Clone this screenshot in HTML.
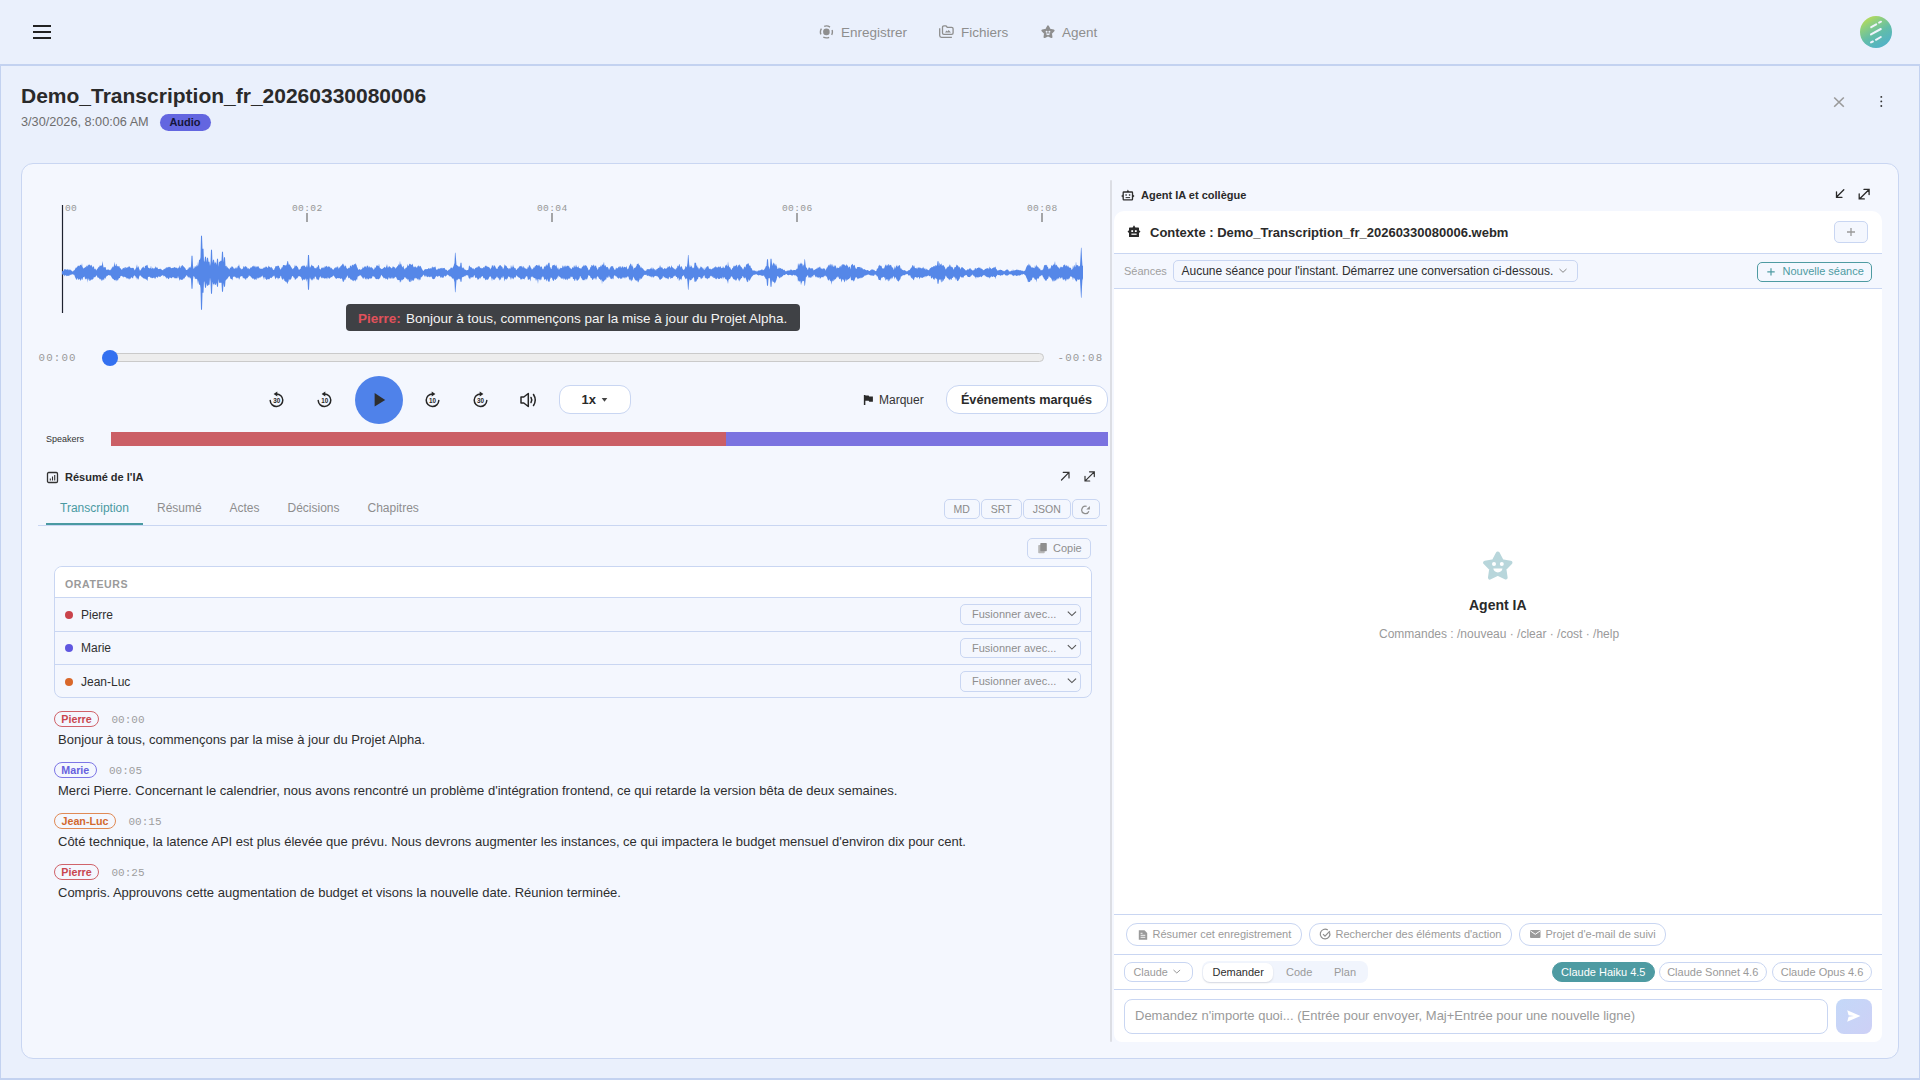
<!DOCTYPE html>
<html><head><meta charset="utf-8">
<style>
*{box-sizing:border-box;margin:0;padding:0}
html,body{width:1920px;height:1080px;overflow:hidden}
body{font-family:"Liberation Sans",sans-serif;background:#EAF0FC;color:#2A2A2A;position:relative}
.a{position:absolute}
.mono{font-family:"Liberation Mono",monospace}
.nav{color:#8E8E8E;font-size:13.5px;top:24.5px;white-space:nowrap}
.frame{left:0;top:64px;width:1920px;height:1016px;border:1px solid #C3D2F0;border-top:2px solid #C3D2F0;border-bottom:2px solid #C3D2F0}
.card{left:21px;top:163px;width:1878px;height:896px;border:1px solid #C9D6F2;border-radius:12px;background:#F4F7FE}
.btn{border:1px solid #C7D5F3;border-radius:5px;background:#F4F7FE;color:#8A8A8A}
.t{white-space:nowrap}
.chip{top:923px;height:22.5px;border:1px solid #C9D6F2;border-radius:11px;font-size:11px;color:#9A9A9A;line-height:19.5px;padding-top:1px}
.mdl{top:961.5px;height:20.5px;border:1px solid #C9D6F2;border-radius:11px;font-size:11px;color:#9A9A9A;line-height:18.5px;text-align:center}

.tab{top:501px;font-size:12px;color:#8E8E8E}
.xb{top:499px;height:20px;border:1px solid #C9D6F2;border-radius:5px;font-size:10.5px;color:#8A8A8A;text-align:center;line-height:19px}
.spk{font-size:12px;color:#2F2F2F}
.sel{left:960px;width:120.5px;height:20.5px;border:1px solid #C9D6F2;border-radius:5px;font-size:11px;color:#8E8E8E;line-height:19px;padding-left:11px}
.bdg{height:16.5px;border:1.3px solid;border-radius:9px;font-size:10.7px;font-weight:bold;text-align:center;line-height:14px}
.tm{font-size:11px;color:#9E9E9E;line-height:14px}
.tx{left:58px;font-size:13px;color:#2E2E2E}

.tl{top:202.5px;font-size:9.6px;color:#979797;letter-spacing:0.35px}
</style></head>
<body>
<!-- header -->
<div class="a" style="left:33px;top:25px;width:18px;height:2px;background:#222"></div>
<div class="a" style="left:33px;top:31px;width:18px;height:2px;background:#222"></div>
<div class="a" style="left:33px;top:37px;width:18px;height:2px;background:#222"></div>

<div class="a nav" style="left:841px">Enregistrer</div>
<div class="a nav" style="left:961px">Fichiers</div>
<div class="a nav" style="left:1062px">Agent</div>

<div class="a" style="left:1860px;top:16px;width:32px;height:32px;border-radius:50%;background:linear-gradient(150deg,#D2E33E 0%,#8FCF7E 28%,#62BDA8 55%,#55B4C2 80%,#52B0C4 100%)"></div>


<svg class="a" style="left:818px;top:23px" width="18" height="18"><circle cx="8.4" cy="8.9" r="3.3" fill="#8E8E8E"/><circle cx="8.4" cy="8.9" r="6" fill="none" stroke="#8E8E8E" stroke-width="1.4" stroke-dasharray="6.1 3.325" stroke-dashoffset="3.05"/></svg>
<svg class="a" style="left:937px;top:23px" width="20" height="18"><path d="M2.7 5.2 V12.6 Q2.7 14.3 4.4 14.3 H14.9" fill="none" stroke="#8E8E8E" stroke-width="1.3"/><path d="M5.5 4.3 Q5.5 2.8 7 2.8 H8.6 Q9.4 2.8 9.8 3.6 L10.2 4.3 H14.6 Q16.1 4.3 16.1 5.8 V9.9 Q16.1 11.3 14.7 11.3 H6.9 Q5.5 11.3 5.5 9.9Z" fill="none" stroke="#8E8E8E" stroke-width="1.3"/><path d="M8 9.6 L9.6 7.4 L10.5 8.4 L11.6 7 L14 9.6Z" fill="#8E8E8E"/></svg>
<svg class="a" style="left:1039px;top:23px" width="18" height="18"><path d="M9.00 3.40 L10.80 6.82 L14.61 7.48 L11.92 10.25 L12.47 14.07 L9.00 12.37 L5.53 14.07 L6.08 10.25 L3.39 7.48 L7.20 6.82Z" fill="#8E8E8E" stroke="#8E8E8E" stroke-width="2" stroke-linejoin="round"/><circle cx="7.6" cy="8.8" r="0.95" fill="#EAF0FC"/><circle cx="10.4" cy="8.8" r="0.95" fill="#EAF0FC"/><path d="M6.9 10.6 H11.1 Q10.7 12.3 9 12.3 Q7.3 12.3 6.9 10.6Z" fill="#EAF0FC"/></svg>

<svg class="a" style="left:1860px;top:16px" width="32" height="32"><g stroke="#EEF3FD" stroke-width="2" stroke-linecap="round"><path d="M11.2 11.2 L16.2 8.4"/><path d="M19.1 6.6 L21 5.7"/><path d="M11 18.4 L20.8 13"/><path d="M16 23.8 L20.8 21"/><path d="M11 26.4 L12.9 25.5"/></g></svg>

<svg class="a" style="left:1831px;top:94px" width="16" height="16"><path d="M3.2 3.5 L12.8 12.8 M12.8 3.5 L3.2 12.8" stroke="#9A9A9A" stroke-width="1.6"/></svg>
<svg class="a" style="left:1876px;top:93px" width="10" height="16"><circle cx="5.3" cy="3.9" r="0.95" fill="#333"/><circle cx="5.3" cy="8.4" r="0.95" fill="#333"/><circle cx="5.3" cy="13" r="0.95" fill="#333"/></svg>
<div class="a frame"></div>

<div class="a t" style="left:21px;top:84px;font-size:21px;font-weight:bold;color:#2A2A2A">Demo_Transcription_fr_20260330080006</div>
<div class="a t" style="left:21px;top:115px;font-size:12.7px;color:#6E6E6E">3/30/2026, 8:00:06 AM</div>
<div class="a t" style="left:159.5px;top:114px;width:51px;height:17px;border-radius:9px;background:#6366E0;color:#16163A;font-size:11px;font-weight:bold;text-align:center;line-height:17px">Audio</div>

<div class="a card"></div>


<!-- LEFT PANEL -->
<svg class="a" style="left:0;top:0" width="1110" height="330">
<line x1="62.5" y1="205" x2="62.5" y2="313" stroke="#1E2230" stroke-width="1.2"/>
<path d="M62.0 271.4 L62.5 271.0 L63.0 270.7 L63.5 270.9 L64.0 270.0 L64.5 268.7 L65.0 269.8 L65.5 268.8 L66.0 270.0 L66.5 269.6 L67.0 269.4 L67.5 269.6 L68.0 269.0 L68.5 269.8 L69.0 270.4 L69.5 269.5 L70.0 269.6 L70.5 269.8 L71.0 270.4 L71.5 270.4 L72.0 271.0 L72.5 271.5 L73.0 271.4 L73.5 270.7 L74.0 270.3 L74.5 270.2 L75.0 269.2 L75.5 268.3 L76.0 267.2 L76.5 267.9 L77.0 267.0 L77.5 266.6 L78.0 265.6 L78.5 266.0 L79.0 265.5 L79.5 266.5 L80.0 264.7 L80.5 265.0 L81.0 264.7 L81.5 266.1 L82.0 263.1 L82.5 267.3 L83.0 267.6 L83.5 268.8 L84.0 267.9 L84.5 268.0 L85.0 267.0 L85.5 266.7 L86.0 267.8 L86.5 265.5 L87.0 265.9 L87.5 266.4 L88.0 264.6 L88.5 265.5 L89.0 264.2 L89.5 264.7 L90.0 264.9 L90.5 265.9 L91.0 264.8 L91.5 265.0 L92.0 266.3 L92.5 267.7 L93.0 266.0 L93.5 266.6 L94.0 266.9 L94.5 269.3 L95.0 268.9 L95.5 268.6 L96.0 270.3 L96.5 270.2 L97.0 268.9 L97.5 268.8 L98.0 268.1 L98.5 266.8 L99.0 267.4 L99.5 265.9 L100.0 265.2 L100.5 265.9 L101.0 265.6 L101.5 265.7 L102.0 265.0 L102.5 260.9 L103.0 264.2 L103.5 267.3 L104.0 267.6 L104.5 267.3 L105.0 267.0 L105.5 267.0 L106.0 268.8 L106.5 270.1 L107.0 270.0 L107.5 269.4 L108.0 269.4 L108.5 269.4 L109.0 269.8 L109.5 270.1 L110.0 270.4 L110.5 269.5 L111.0 269.8 L111.5 268.5 L112.0 267.4 L112.5 267.3 L113.0 266.0 L113.5 267.6 L114.0 264.9 L114.5 261.7 L115.0 265.7 L115.5 266.0 L116.0 264.1 L116.5 263.8 L117.0 266.7 L117.5 266.1 L118.0 265.7 L118.5 266.7 L119.0 265.9 L119.5 266.4 L120.0 268.4 L120.5 268.1 L121.0 268.9 L121.5 269.6 L122.0 270.1 L122.5 268.4 L123.0 268.6 L123.5 267.8 L124.0 268.3 L124.5 267.1 L125.0 269.1 L125.5 267.1 L126.0 267.0 L126.5 268.1 L127.0 267.7 L127.5 267.1 L128.0 267.7 L128.5 266.4 L129.0 266.5 L129.5 266.3 L130.0 267.3 L130.5 267.7 L131.0 268.2 L131.5 267.9 L132.0 267.8 L132.5 268.1 L133.0 267.7 L133.5 268.0 L134.0 268.7 L134.5 270.0 L135.0 270.4 L135.5 268.4 L136.0 268.4 L136.5 266.5 L137.0 264.2 L137.5 267.4 L138.0 267.4 L138.5 265.7 L139.0 268.4 L139.5 269.6 L140.0 270.9 L140.5 269.9 L141.0 269.7 L141.5 268.5 L142.0 267.9 L142.5 267.5 L143.0 266.8 L143.5 266.5 L144.0 268.0 L144.5 268.3 L145.0 265.9 L145.5 265.7 L146.0 265.8 L146.5 265.1 L147.0 265.7 L147.5 264.5 L148.0 267.3 L148.5 267.9 L149.0 267.8 L149.5 268.5 L150.0 268.3 L150.5 268.0 L151.0 265.6 L151.5 268.5 L152.0 268.9 L152.5 267.6 L153.0 268.1 L153.5 268.2 L154.0 269.4 L154.5 267.7 L155.0 267.9 L155.5 266.1 L156.0 267.7 L156.5 267.5 L157.0 267.6 L157.5 267.5 L158.0 269.1 L158.5 268.9 L159.0 269.2 L159.5 268.7 L160.0 268.9 L160.5 268.4 L161.0 269.6 L161.5 269.2 L162.0 270.1 L162.5 270.1 L163.0 270.6 L163.5 269.3 L164.0 269.3 L164.5 268.6 L165.0 269.4 L165.5 268.0 L166.0 267.8 L166.5 267.1 L167.0 268.4 L167.5 266.7 L168.0 267.7 L168.5 266.8 L169.0 267.0 L169.5 267.3 L170.0 266.6 L170.5 267.4 L171.0 268.1 L171.5 268.2 L172.0 267.9 L172.5 268.0 L173.0 267.5 L173.5 268.1 L174.0 267.2 L174.5 266.9 L175.0 267.4 L175.5 267.7 L176.0 267.4 L176.5 268.0 L177.0 267.4 L177.5 268.5 L178.0 268.6 L178.5 267.7 L179.0 267.1 L179.5 265.1 L180.0 268.0 L180.5 267.7 L181.0 265.5 L181.5 266.7 L182.0 265.1 L182.5 265.1 L183.0 266.4 L183.5 266.1 L184.0 267.0 L184.5 267.2 L185.0 268.0 L185.5 268.4 L186.0 269.9 L186.5 270.0 L187.0 269.8 L187.5 269.8 L188.0 268.2 L188.5 269.0 L189.0 266.8 L189.5 268.0 L190.0 266.8 L190.5 268.1 L191.0 265.6 L191.5 255.7 L192.0 255.7 L192.5 255.7 L193.0 265.6 L193.5 268.7 L194.0 268.4 L194.5 267.6 L195.0 265.8 L195.5 266.5 L196.0 267.5 L196.5 265.4 L197.0 264.9 L197.5 266.5 L198.0 261.2 L198.5 266.1 L199.0 259.7 L199.5 259.7 L200.0 259.7 L200.5 257.2 L201.0 235.7 L201.5 235.7 L202.0 235.7 L202.5 248.7 L203.0 248.7 L203.5 248.7 L204.0 262.0 L204.5 261.0 L205.0 256.7 L205.5 256.7 L206.0 256.7 L206.5 262.6 L207.0 257.7 L207.5 257.7 L208.0 257.7 L208.5 261.7 L209.0 261.7 L209.5 261.7 L210.0 266.0 L210.5 263.0 L211.0 249.7 L211.5 249.7 L212.0 249.7 L212.5 263.0 L213.0 259.7 L213.5 259.7 L214.0 259.7 L214.5 264.1 L215.0 261.2 L215.5 262.7 L216.0 262.7 L216.5 265.1 L217.0 258.7 L217.5 258.7 L218.0 258.7 L218.5 266.8 L219.0 261.7 L219.5 261.7 L220.0 261.7 L220.5 260.7 L221.0 260.7 L221.5 260.7 L222.0 251.7 L222.5 251.7 L223.0 251.7 L223.5 262.4 L224.0 257.2 L224.5 257.2 L225.0 257.2 L225.5 266.0 L226.0 266.3 L226.5 265.6 L227.0 268.1 L227.5 266.4 L228.0 268.1 L228.5 268.3 L229.0 269.0 L229.5 269.5 L230.0 267.6 L230.5 267.5 L231.0 268.2 L231.5 266.0 L232.0 266.9 L232.5 266.2 L233.0 267.3 L233.5 267.8 L234.0 269.0 L234.5 268.4 L235.0 268.3 L235.5 268.6 L236.0 266.8 L236.5 268.0 L237.0 268.8 L237.5 266.9 L238.0 265.7 L238.5 266.3 L239.0 264.0 L239.5 266.4 L240.0 268.3 L240.5 267.8 L241.0 269.4 L241.5 269.3 L242.0 268.6 L242.5 269.2 L243.0 267.9 L243.5 266.6 L244.0 265.8 L244.5 267.2 L245.0 267.2 L245.5 265.9 L246.0 266.1 L246.5 267.4 L247.0 266.8 L247.5 268.7 L248.0 268.3 L248.5 267.9 L249.0 269.4 L249.5 268.8 L250.0 268.6 L250.5 267.5 L251.0 267.4 L251.5 267.5 L252.0 266.9 L252.5 266.3 L253.0 265.9 L253.5 265.5 L254.0 267.2 L254.5 266.3 L255.0 265.4 L255.5 266.8 L256.0 267.8 L256.5 265.9 L257.0 267.2 L257.5 266.5 L258.0 265.9 L258.5 266.6 L259.0 267.6 L259.5 268.7 L260.0 267.6 L260.5 269.0 L261.0 268.9 L261.5 268.6 L262.0 268.9 L262.5 268.8 L263.0 268.3 L263.5 268.3 L264.0 267.0 L264.5 267.6 L265.0 268.3 L265.5 266.3 L266.0 267.2 L266.5 266.5 L267.0 266.7 L267.5 267.9 L268.0 267.7 L268.5 265.4 L269.0 266.4 L269.5 266.7 L270.0 267.0 L270.5 267.8 L271.0 267.2 L271.5 266.7 L272.0 268.5 L272.5 268.0 L273.0 269.9 L273.5 269.4 L274.0 270.3 L274.5 268.4 L275.0 267.7 L275.5 266.2 L276.0 265.9 L276.5 266.1 L277.0 266.7 L277.5 265.5 L278.0 266.0 L278.5 265.6 L279.0 266.2 L279.5 267.8 L280.0 268.4 L280.5 269.6 L281.0 269.5 L281.5 267.6 L282.0 267.5 L282.5 267.2 L283.0 264.9 L283.5 265.0 L284.0 265.2 L284.5 265.0 L285.0 265.5 L285.5 265.2 L286.0 265.4 L286.5 264.9 L287.0 263.1 L287.5 260.9 L288.0 260.9 L288.5 263.5 L289.0 265.2 L289.5 263.9 L290.0 265.1 L290.5 265.9 L291.0 266.7 L291.5 267.4 L292.0 268.5 L292.5 268.8 L293.0 269.6 L293.5 268.1 L294.0 268.0 L294.5 266.4 L295.0 264.6 L295.5 266.4 L296.0 266.1 L296.5 265.6 L297.0 266.2 L297.5 267.0 L298.0 267.6 L298.5 269.0 L299.0 270.0 L299.5 269.4 L300.0 269.0 L300.5 269.0 L301.0 267.0 L301.5 266.5 L302.0 266.0 L302.5 265.4 L303.0 266.4 L303.5 265.5 L304.0 265.4 L304.5 265.8 L305.0 265.7 L305.5 267.3 L306.0 267.0 L306.5 264.4 L307.0 267.8 L307.5 265.3 L308.0 255.1 L308.5 255.1 L309.0 255.1 L309.5 265.3 L310.0 268.0 L310.5 266.4 L311.0 266.4 L311.5 264.4 L312.0 264.9 L312.5 266.1 L313.0 266.0 L313.5 266.1 L314.0 267.3 L314.5 267.7 L315.0 268.5 L315.5 267.8 L316.0 268.8 L316.5 267.8 L317.0 266.5 L317.5 267.5 L318.0 265.4 L318.5 265.0 L319.0 265.6 L319.5 268.7 L320.0 269.1 L320.5 269.7 L321.0 268.8 L321.5 267.5 L322.0 267.9 L322.5 267.3 L323.0 268.5 L323.5 266.8 L324.0 268.6 L324.5 267.0 L325.0 265.9 L325.5 266.7 L326.0 266.8 L326.5 265.7 L327.0 266.1 L327.5 267.6 L328.0 266.6 L328.5 266.8 L329.0 265.9 L329.5 267.3 L330.0 266.4 L330.5 268.1 L331.0 268.5 L331.5 267.5 L332.0 268.8 L332.5 268.9 L333.0 269.9 L333.5 269.6 L334.0 268.9 L334.5 267.9 L335.0 267.8 L335.5 267.0 L336.0 268.5 L336.5 266.6 L337.0 267.7 L337.5 266.4 L338.0 266.3 L338.5 268.5 L339.0 268.6 L339.5 266.9 L340.0 267.7 L340.5 266.1 L341.0 266.3 L341.5 265.2 L342.0 264.9 L342.5 264.0 L343.0 263.6 L343.5 264.2 L344.0 265.8 L344.5 266.9 L345.0 264.4 L345.5 266.2 L346.0 265.9 L346.5 268.2 L347.0 268.3 L347.5 269.1 L348.0 268.7 L348.5 267.6 L349.0 268.3 L349.5 267.9 L350.0 266.3 L350.5 265.2 L351.0 266.2 L351.5 266.8 L352.0 264.6 L352.5 265.2 L353.0 264.5 L353.5 265.7 L354.0 264.0 L354.5 263.9 L355.0 264.7 L355.5 263.1 L356.0 264.2 L356.5 265.0 L357.0 266.9 L357.5 267.8 L358.0 269.1 L358.5 270.1 L359.0 269.5 L359.5 269.2 L360.0 269.1 L360.5 269.7 L361.0 270.2 L361.5 269.0 L362.0 268.9 L362.5 268.0 L363.0 266.5 L363.5 268.2 L364.0 267.5 L364.5 266.4 L365.0 266.3 L365.5 267.1 L366.0 265.7 L366.5 268.1 L367.0 265.2 L367.5 265.9 L368.0 265.4 L368.5 267.3 L369.0 267.6 L369.5 265.8 L370.0 268.1 L370.5 266.7 L371.0 268.2 L371.5 266.7 L372.0 267.6 L372.5 268.4 L373.0 268.3 L373.5 269.8 L374.0 269.5 L374.5 268.5 L375.0 266.7 L375.5 268.3 L376.0 266.8 L376.5 265.5 L377.0 265.3 L377.5 265.4 L378.0 266.1 L378.5 266.3 L379.0 263.5 L379.5 266.6 L380.0 268.4 L380.5 267.9 L381.0 268.7 L381.5 269.2 L382.0 268.7 L382.5 268.9 L383.0 268.2 L383.5 267.9 L384.0 267.5 L384.5 266.8 L385.0 267.3 L385.5 268.1 L386.0 267.1 L386.5 266.0 L387.0 264.0 L387.5 266.4 L388.0 268.3 L388.5 266.4 L389.0 266.8 L389.5 265.9 L390.0 267.0 L390.5 267.2 L391.0 267.7 L391.5 268.5 L392.0 267.7 L392.5 267.5 L393.0 265.7 L393.5 266.9 L394.0 266.9 L394.5 266.9 L395.0 268.3 L395.5 268.7 L396.0 267.2 L396.5 267.7 L397.0 266.7 L397.5 266.1 L398.0 265.7 L398.5 263.8 L399.0 265.6 L399.5 264.3 L400.0 260.8 L400.5 264.7 L401.0 263.4 L401.5 264.8 L402.0 266.6 L402.5 267.4 L403.0 265.9 L403.5 265.7 L404.0 268.4 L404.5 268.7 L405.0 269.7 L405.5 267.8 L406.0 267.9 L406.5 267.4 L407.0 267.0 L407.5 263.7 L408.0 266.2 L408.5 265.8 L409.0 264.7 L409.5 263.6 L410.0 264.2 L410.5 263.8 L411.0 265.1 L411.5 264.8 L412.0 264.6 L412.5 263.6 L413.0 265.5 L413.5 266.8 L414.0 267.4 L414.5 266.3 L415.0 267.5 L415.5 265.9 L416.0 267.3 L416.5 267.3 L417.0 268.0 L417.5 266.0 L418.0 266.6 L418.5 265.5 L419.0 265.4 L419.5 267.0 L420.0 265.8 L420.5 265.9 L421.0 266.7 L421.5 268.1 L422.0 268.9 L422.5 269.8 L423.0 270.8 L423.5 271.1 L424.0 269.9 L424.5 269.5 L425.0 269.5 L425.5 268.9 L426.0 269.3 L426.5 269.3 L427.0 269.0 L427.5 269.1 L428.0 269.2 L428.5 268.0 L429.0 268.1 L429.5 268.8 L430.0 268.8 L430.5 268.0 L431.0 268.4 L431.5 268.5 L432.0 266.8 L432.5 266.5 L433.0 267.9 L433.5 267.1 L434.0 267.2 L434.5 267.3 L435.0 266.5 L435.5 266.7 L436.0 268.9 L436.5 270.1 L437.0 269.2 L437.5 269.7 L438.0 268.6 L438.5 268.9 L439.0 268.1 L439.5 268.7 L440.0 268.9 L440.5 268.0 L441.0 267.9 L441.5 268.5 L442.0 267.4 L442.5 268.6 L443.0 268.3 L443.5 268.1 L444.0 268.2 L444.5 267.7 L445.0 268.7 L445.5 269.4 L446.0 270.2 L446.5 269.5 L447.0 270.3 L447.5 271.0 L448.0 270.4 L448.5 270.1 L449.0 269.5 L449.5 269.3 L450.0 269.4 L450.5 268.1 L451.0 267.6 L451.5 267.5 L452.0 268.3 L452.5 268.3 L453.0 266.7 L453.5 266.5 L454.0 264.4 L454.5 262.9 L455.0 252.7 L455.5 252.7 L456.0 258.7 L456.5 265.0 L457.0 264.9 L457.5 265.8 L458.0 266.1 L458.5 266.2 L459.0 267.3 L459.5 266.0 L460.0 266.7 L460.5 262.7 L461.0 262.7 L461.5 262.7 L462.0 268.2 L462.5 267.9 L463.0 266.8 L463.5 268.0 L464.0 268.5 L464.5 268.9 L465.0 270.2 L465.5 269.6 L466.0 270.1 L466.5 270.4 L467.0 270.1 L467.5 270.1 L468.0 270.3 L468.5 269.0 L469.0 265.6 L469.5 265.8 L470.0 266.5 L470.5 267.3 L471.0 267.2 L471.5 267.3 L472.0 268.2 L472.5 268.6 L473.0 268.5 L473.5 268.3 L474.0 269.5 L474.5 269.3 L475.0 268.6 L475.5 267.8 L476.0 268.0 L476.5 266.9 L477.0 268.0 L477.5 266.9 L478.0 266.6 L478.5 265.7 L479.0 267.5 L479.5 265.7 L480.0 267.4 L480.5 268.3 L481.0 267.5 L481.5 268.4 L482.0 268.3 L482.5 268.0 L483.0 268.5 L483.5 266.9 L484.0 266.9 L484.5 267.8 L485.0 265.5 L485.5 266.3 L486.0 265.3 L486.5 266.3 L487.0 266.5 L487.5 266.7 L488.0 266.6 L488.5 267.3 L489.0 267.0 L489.5 267.8 L490.0 268.4 L490.5 269.4 L491.0 267.8 L491.5 267.7 L492.0 265.1 L492.5 265.9 L493.0 264.8 L493.5 267.4 L494.0 265.0 L494.5 265.5 L495.0 266.2 L495.5 266.8 L496.0 268.6 L496.5 268.4 L497.0 269.1 L497.5 268.8 L498.0 266.9 L498.5 266.7 L499.0 266.0 L499.5 265.4 L500.0 264.9 L500.5 265.1 L501.0 266.2 L501.5 266.3 L502.0 266.7 L502.5 267.3 L503.0 269.6 L503.5 268.2 L504.0 267.5 L504.5 264.1 L505.0 265.7 L505.5 265.0 L506.0 266.3 L506.5 265.8 L507.0 267.2 L507.5 268.0 L508.0 268.1 L508.5 268.6 L509.0 269.5 L509.5 268.0 L510.0 268.2 L510.5 268.7 L511.0 264.5 L511.5 268.0 L512.0 265.7 L512.5 268.0 L513.0 264.3 L513.5 266.5 L514.0 267.2 L514.5 267.9 L515.0 268.5 L515.5 267.8 L516.0 270.0 L516.5 270.1 L517.0 269.1 L517.5 268.6 L518.0 268.5 L518.5 267.8 L519.0 266.9 L519.5 266.1 L520.0 266.7 L520.5 266.0 L521.0 266.1 L521.5 266.7 L522.0 265.5 L522.5 267.9 L523.0 266.5 L523.5 266.1 L524.0 268.3 L524.5 266.9 L525.0 268.7 L525.5 268.2 L526.0 268.5 L526.5 268.8 L527.0 269.6 L527.5 268.1 L528.0 266.4 L528.5 267.9 L529.0 265.1 L529.5 265.6 L530.0 265.6 L530.5 266.9 L531.0 268.0 L531.5 268.4 L532.0 269.9 L532.5 268.6 L533.0 269.3 L533.5 267.0 L534.0 267.9 L534.5 267.3 L535.0 265.8 L535.5 266.6 L536.0 265.1 L536.5 265.0 L537.0 265.2 L537.5 265.5 L538.0 265.6 L538.5 265.7 L539.0 264.3 L539.5 265.5 L540.0 266.6 L540.5 267.6 L541.0 265.8 L541.5 266.8 L542.0 267.2 L542.5 269.0 L543.0 269.4 L543.5 269.0 L544.0 266.9 L544.5 265.9 L545.0 267.0 L545.5 266.2 L546.0 265.0 L546.5 264.3 L547.0 266.4 L547.5 264.7 L548.0 264.1 L548.5 262.7 L549.0 262.7 L549.5 262.7 L550.0 267.2 L550.5 267.3 L551.0 269.1 L551.5 268.9 L552.0 266.5 L552.5 265.5 L553.0 265.0 L553.5 265.0 L554.0 265.4 L554.5 264.3 L555.0 265.7 L555.5 266.2 L556.0 264.4 L556.5 265.5 L557.0 267.3 L557.5 269.1 L558.0 266.9 L558.5 268.7 L559.0 269.9 L559.5 268.4 L560.0 268.7 L560.5 267.5 L561.0 268.3 L561.5 267.8 L562.0 268.3 L562.5 266.0 L563.0 265.2 L563.5 267.8 L564.0 265.4 L564.5 266.1 L565.0 267.6 L565.5 265.0 L566.0 267.0 L566.5 266.2 L567.0 265.4 L567.5 266.0 L568.0 265.5 L568.5 266.5 L569.0 265.5 L569.5 267.5 L570.0 267.7 L570.5 267.9 L571.0 269.2 L571.5 269.1 L572.0 268.3 L572.5 266.7 L573.0 268.1 L573.5 267.4 L574.0 265.3 L574.5 265.9 L575.0 267.6 L575.5 266.5 L576.0 264.5 L576.5 266.1 L577.0 267.2 L577.5 266.8 L578.0 267.7 L578.5 265.5 L579.0 268.4 L579.5 267.9 L580.0 268.0 L580.5 268.8 L581.0 268.0 L581.5 268.8 L582.0 266.5 L582.5 266.8 L583.0 266.6 L583.5 265.7 L584.0 264.4 L584.5 266.5 L585.0 265.0 L585.5 265.6 L586.0 265.3 L586.5 265.9 L587.0 266.5 L587.5 267.7 L588.0 268.5 L588.5 270.2 L589.0 270.2 L589.5 269.6 L590.0 268.8 L590.5 266.6 L591.0 267.4 L591.5 265.0 L592.0 264.9 L592.5 265.8 L593.0 265.9 L593.5 264.7 L594.0 264.6 L594.5 266.9 L595.0 265.6 L595.5 266.0 L596.0 265.2 L596.5 267.6 L597.0 267.9 L597.5 269.7 L598.0 269.6 L598.5 267.4 L599.0 266.7 L599.5 266.9 L600.0 267.4 L600.5 265.8 L601.0 265.3 L601.5 266.7 L602.0 264.1 L602.5 264.8 L603.0 265.3 L603.5 263.6 L604.0 261.8 L604.5 266.6 L605.0 264.8 L605.5 265.4 L606.0 266.6 L606.5 267.4 L607.0 266.7 L607.5 266.9 L608.0 267.6 L608.5 268.4 L609.0 270.0 L609.5 269.0 L610.0 267.6 L610.5 267.5 L611.0 265.9 L611.5 266.4 L612.0 266.0 L612.5 266.6 L613.0 265.9 L613.5 267.9 L614.0 268.5 L614.5 270.1 L615.0 269.6 L615.5 269.8 L616.0 267.3 L616.5 268.2 L617.0 268.6 L617.5 268.3 L618.0 267.8 L618.5 267.0 L619.0 266.5 L619.5 266.3 L620.0 268.1 L620.5 266.3 L621.0 266.2 L621.5 268.3 L622.0 267.1 L622.5 266.3 L623.0 266.6 L623.5 268.2 L624.0 266.5 L624.5 267.1 L625.0 266.9 L625.5 267.3 L626.0 267.5 L626.5 265.8 L627.0 268.0 L627.5 269.5 L628.0 268.7 L628.5 268.4 L629.0 266.5 L629.5 265.5 L630.0 264.8 L630.5 263.5 L631.0 263.8 L631.5 266.4 L632.0 263.7 L632.5 266.8 L633.0 266.3 L633.5 269.9 L634.0 267.4 L634.5 268.3 L635.0 267.8 L635.5 267.6 L636.0 266.5 L636.5 266.0 L637.0 263.4 L637.5 264.3 L638.0 263.8 L638.5 263.3 L639.0 265.6 L639.5 264.8 L640.0 266.1 L640.5 266.9 L641.0 268.2 L641.5 266.6 L642.0 268.7 L642.5 268.0 L643.0 268.6 L643.5 269.5 L644.0 270.0 L644.5 270.7 L645.0 270.5 L645.5 270.7 L646.0 271.0 L646.5 270.0 L647.0 268.9 L647.5 269.3 L648.0 269.3 L648.5 269.2 L649.0 268.9 L649.5 269.5 L650.0 268.9 L650.5 267.9 L651.0 269.3 L651.5 268.3 L652.0 267.1 L652.5 268.7 L653.0 269.8 L653.5 267.6 L654.0 269.0 L654.5 268.9 L655.0 270.4 L655.5 269.3 L656.0 270.8 L656.5 269.0 L657.0 268.9 L657.5 268.8 L658.0 268.3 L658.5 267.8 L659.0 267.9 L659.5 267.2 L660.0 264.9 L660.5 266.6 L661.0 268.0 L661.5 267.0 L662.0 267.8 L662.5 267.4 L663.0 269.4 L663.5 269.1 L664.0 268.8 L664.5 268.1 L665.0 268.3 L665.5 268.9 L666.0 268.2 L666.5 268.7 L667.0 267.9 L667.5 267.5 L668.0 266.0 L668.5 267.4 L669.0 266.6 L669.5 265.9 L670.0 266.8 L670.5 268.3 L671.0 267.1 L671.5 265.1 L672.0 266.8 L672.5 267.4 L673.0 267.6 L673.5 268.4 L674.0 268.3 L674.5 269.5 L675.0 268.5 L675.5 269.4 L676.0 269.7 L676.5 267.5 L677.0 268.3 L677.5 265.6 L678.0 266.1 L678.5 266.6 L679.0 264.4 L679.5 264.1 L680.0 265.9 L680.5 267.7 L681.0 266.3 L681.5 266.2 L682.0 267.0 L682.5 268.7 L683.0 269.6 L683.5 269.8 L684.0 270.0 L684.5 269.0 L685.0 268.3 L685.5 265.9 L686.0 266.2 L686.5 267.4 L687.0 266.0 L687.5 262.8 L688.0 255.1 L688.5 255.1 L689.0 261.6 L689.5 267.7 L690.0 264.5 L690.5 266.8 L691.0 266.9 L691.5 265.3 L692.0 266.9 L692.5 268.6 L693.0 267.1 L693.5 268.1 L694.0 268.2 L694.5 262.7 L695.0 262.7 L695.5 262.7 L696.0 262.8 L696.5 266.2 L697.0 264.9 L697.5 267.4 L698.0 267.2 L698.5 268.1 L699.0 269.7 L699.5 267.9 L700.0 268.4 L700.5 266.8 L701.0 266.2 L701.5 267.6 L702.0 266.8 L702.5 268.7 L703.0 267.4 L703.5 269.1 L704.0 269.8 L704.5 269.9 L705.0 266.9 L705.5 269.4 L706.0 267.2 L706.5 267.6 L707.0 266.3 L707.5 266.4 L708.0 266.0 L708.5 266.7 L709.0 268.8 L709.5 268.9 L710.0 268.2 L710.5 269.0 L711.0 269.4 L711.5 269.2 L712.0 269.1 L712.5 268.3 L713.0 268.7 L713.5 267.9 L714.0 267.5 L714.5 267.0 L715.0 267.7 L715.5 266.2 L716.0 266.6 L716.5 267.5 L717.0 267.3 L717.5 267.4 L718.0 267.4 L718.5 266.3 L719.0 267.1 L719.5 267.5 L720.0 266.0 L720.5 266.6 L721.0 267.4 L721.5 268.3 L722.0 267.9 L722.5 267.9 L723.0 265.9 L723.5 267.3 L724.0 267.9 L724.5 268.2 L725.0 266.8 L725.5 265.3 L726.0 265.5 L726.5 264.2 L727.0 266.1 L727.5 266.5 L728.0 261.3 L728.5 265.1 L729.0 266.3 L729.5 267.6 L730.0 267.0 L730.5 268.3 L731.0 269.4 L731.5 269.9 L732.0 268.7 L732.5 267.9 L733.0 267.8 L733.5 266.2 L734.0 265.4 L734.5 266.7 L735.0 265.3 L735.5 266.2 L736.0 265.6 L736.5 265.0 L737.0 264.5 L737.5 267.4 L738.0 265.9 L738.5 265.3 L739.0 264.8 L739.5 264.3 L740.0 265.7 L740.5 265.6 L741.0 267.2 L741.5 266.7 L742.0 267.9 L742.5 268.4 L743.0 269.7 L743.5 268.9 L744.0 267.3 L744.5 266.2 L745.0 267.4 L745.5 267.3 L746.0 265.3 L746.5 264.3 L747.0 264.0 L747.5 264.3 L748.0 262.8 L748.5 263.5 L749.0 264.7 L749.5 266.0 L750.0 265.3 L750.5 266.1 L751.0 268.4 L751.5 267.8 L752.0 269.0 L752.5 270.5 L753.0 270.6 L753.5 270.4 L754.0 270.5 L754.5 270.4 L755.0 270.8 L755.5 270.8 L756.0 271.5 L756.5 271.5 L757.0 270.3 L757.5 271.4 L758.0 271.2 L758.5 270.2 L759.0 270.6 L759.5 270.2 L760.0 270.7 L760.5 269.9 L761.0 269.9 L761.5 269.6 L762.0 269.4 L762.5 269.6 L763.0 270.4 L763.5 269.7 L764.0 269.9 L764.5 268.7 L765.0 268.4 L765.5 267.0 L766.0 266.0 L766.5 266.2 L767.0 259.2 L767.5 259.2 L768.0 259.2 L768.5 266.2 L769.0 266.8 L769.5 269.6 L770.0 266.8 L770.5 258.7 L771.0 258.7 L771.5 258.7 L772.0 264.1 L772.5 266.1 L773.0 262.9 L773.5 262.6 L774.0 264.6 L774.5 262.9 L775.0 265.9 L775.5 265.1 L776.0 263.6 L776.5 265.7 L777.0 266.7 L777.5 269.0 L778.0 268.9 L778.5 268.2 L779.0 267.3 L779.5 268.3 L780.0 268.4 L780.5 268.0 L781.0 268.3 L781.5 269.3 L782.0 268.5 L782.5 268.9 L783.0 269.5 L783.5 269.9 L784.0 270.3 L784.5 269.4 L785.0 270.7 L785.5 271.2 L786.0 271.3 L786.5 271.2 L787.0 270.6 L787.5 270.6 L788.0 270.9 L788.5 270.2 L789.0 270.6 L789.5 270.2 L790.0 270.4 L790.5 269.6 L791.0 269.6 L791.5 269.8 L792.0 269.9 L792.5 270.7 L793.0 269.8 L793.5 270.2 L794.0 270.1 L794.5 270.1 L795.0 270.1 L795.5 270.2 L796.0 269.6 L796.5 269.2 L797.0 268.2 L797.5 269.1 L798.0 263.1 L798.5 264.2 L799.0 265.9 L799.5 264.3 L800.0 263.3 L800.5 264.0 L801.0 262.3 L801.5 263.9 L802.0 263.3 L802.5 264.5 L803.0 266.8 L803.5 264.6 L804.0 265.1 L804.5 259.2 L805.0 259.2 L805.5 264.2 L806.0 267.4 L806.5 267.6 L807.0 268.3 L807.5 269.6 L808.0 270.1 L808.5 267.4 L809.0 267.7 L809.5 267.5 L810.0 267.7 L810.5 269.0 L811.0 267.7 L811.5 268.7 L812.0 268.1 L812.5 268.4 L813.0 268.4 L813.5 270.4 L814.0 270.1 L814.5 269.7 L815.0 269.8 L815.5 268.9 L816.0 269.3 L816.5 268.0 L817.0 269.3 L817.5 267.7 L818.0 267.4 L818.5 267.7 L819.0 267.2 L819.5 267.3 L820.0 266.2 L820.5 267.8 L821.0 268.7 L821.5 268.7 L822.0 267.9 L822.5 269.5 L823.0 268.3 L823.5 268.3 L824.0 269.0 L824.5 268.5 L825.0 268.5 L825.5 270.7 L826.0 269.5 L826.5 268.5 L827.0 267.3 L827.5 267.4 L828.0 265.8 L828.5 265.6 L829.0 264.6 L829.5 264.7 L830.0 266.4 L830.5 263.5 L831.0 265.0 L831.5 264.0 L832.0 267.1 L832.5 263.8 L833.0 266.4 L833.5 267.1 L834.0 264.7 L834.5 267.0 L835.0 265.0 L835.5 265.7 L836.0 266.5 L836.5 268.3 L837.0 268.4 L837.5 267.2 L838.0 268.1 L838.5 267.8 L839.0 268.2 L839.5 266.6 L840.0 266.5 L840.5 265.6 L841.0 267.7 L841.5 264.5 L842.0 265.8 L842.5 264.0 L843.0 264.5 L843.5 263.9 L844.0 265.2 L844.5 264.3 L845.0 265.5 L845.5 265.8 L846.0 265.4 L846.5 263.8 L847.0 266.0 L847.5 265.1 L848.0 266.6 L848.5 267.9 L849.0 266.2 L849.5 266.8 L850.0 267.2 L850.5 269.6 L851.0 265.5 L851.5 265.0 L852.0 264.3 L852.5 263.7 L853.0 264.8 L853.5 266.0 L854.0 264.9 L854.5 264.7 L855.0 266.3 L855.5 268.0 L856.0 268.7 L856.5 268.9 L857.0 267.5 L857.5 266.9 L858.0 267.1 L858.5 266.9 L859.0 267.0 L859.5 267.2 L860.0 266.7 L860.5 267.2 L861.0 268.8 L861.5 267.3 L862.0 268.1 L862.5 268.3 L863.0 269.5 L863.5 268.9 L864.0 269.7 L864.5 269.0 L865.0 269.3 L865.5 270.0 L866.0 270.1 L866.5 270.4 L867.0 269.9 L867.5 270.0 L868.0 270.3 L868.5 270.6 L869.0 271.1 L869.5 270.9 L870.0 270.7 L870.5 269.7 L871.0 270.4 L871.5 269.2 L872.0 269.6 L872.5 269.8 L873.0 269.0 L873.5 270.2 L874.0 269.7 L874.5 270.2 L875.0 271.1 L875.5 271.0 L876.0 271.2 L876.5 270.4 L877.0 268.6 L877.5 268.4 L878.0 268.5 L878.5 266.0 L879.0 265.4 L879.5 264.4 L880.0 266.2 L880.5 265.6 L881.0 265.7 L881.5 266.0 L882.0 267.7 L882.5 268.6 L883.0 268.4 L883.5 268.3 L884.0 268.8 L884.5 267.3 L885.0 266.1 L885.5 264.9 L886.0 264.3 L886.5 266.4 L887.0 264.4 L887.5 266.0 L888.0 264.4 L888.5 263.8 L889.0 265.9 L889.5 265.2 L890.0 264.6 L890.5 265.3 L891.0 265.0 L891.5 266.0 L892.0 267.4 L892.5 267.5 L893.0 267.6 L893.5 269.5 L894.0 269.7 L894.5 265.8 L895.0 268.7 L895.5 267.4 L896.0 266.3 L896.5 265.9 L897.0 264.6 L897.5 267.0 L898.0 266.2 L898.5 266.2 L899.0 265.1 L899.5 265.2 L900.0 265.6 L900.5 268.4 L901.0 268.6 L901.5 268.6 L902.0 270.0 L902.5 269.8 L903.0 269.7 L903.5 270.5 L904.0 270.3 L904.5 270.1 L905.0 270.4 L905.5 270.8 L906.0 270.8 L906.5 271.5 L907.0 271.2 L907.5 271.2 L908.0 270.6 L908.5 270.5 L909.0 269.8 L909.5 270.2 L910.0 269.6 L910.5 268.6 L911.0 268.2 L911.5 267.5 L912.0 266.5 L912.5 265.1 L913.0 265.2 L913.5 267.1 L914.0 265.1 L914.5 266.6 L915.0 268.2 L915.5 268.0 L916.0 268.2 L916.5 267.4 L917.0 269.4 L917.5 267.9 L918.0 267.3 L918.5 267.5 L919.0 268.1 L919.5 267.1 L920.0 268.4 L920.5 267.5 L921.0 268.0 L921.5 268.3 L922.0 268.7 L922.5 267.3 L923.0 268.5 L923.5 266.4 L924.0 268.9 L924.5 268.7 L925.0 267.8 L925.5 269.3 L926.0 270.0 L926.5 268.6 L927.0 269.6 L927.5 269.4 L928.0 269.9 L928.5 270.1 L929.0 270.5 L929.5 268.9 L930.0 268.4 L930.5 267.8 L931.0 268.2 L931.5 266.8 L932.0 267.3 L932.5 266.8 L933.0 267.6 L933.5 266.0 L934.0 266.0 L934.5 265.7 L935.0 267.0 L935.5 265.1 L936.0 265.3 L936.5 265.7 L937.0 265.6 L937.5 261.2 L938.0 261.2 L938.5 261.2 L939.0 266.8 L939.5 262.2 L940.0 263.8 L940.5 264.7 L941.0 264.2 L941.5 263.3 L942.0 266.6 L942.5 264.8 L943.0 265.7 L943.5 264.8 L944.0 266.1 L944.5 266.7 L945.0 267.6 L945.5 269.2 L946.0 269.4 L946.5 268.2 L947.0 267.6 L947.5 267.3 L948.0 266.4 L948.5 266.4 L949.0 266.8 L949.5 264.7 L950.0 264.6 L950.5 265.7 L951.0 267.3 L951.5 266.2 L952.0 267.5 L952.5 267.1 L953.0 268.0 L953.5 269.7 L954.0 269.0 L954.5 267.3 L955.0 267.0 L955.5 267.2 L956.0 266.4 L956.5 264.3 L957.0 265.7 L957.5 264.9 L958.0 265.7 L958.5 266.4 L959.0 267.8 L959.5 266.5 L960.0 268.1 L960.5 269.5 L961.0 267.7 L961.5 267.6 L962.0 267.0 L962.5 267.3 L963.0 268.0 L963.5 268.1 L964.0 269.0 L964.5 269.0 L965.0 269.8 L965.5 270.2 L966.0 270.6 L966.5 270.3 L967.0 269.9 L967.5 269.1 L968.0 269.8 L968.5 269.4 L969.0 269.1 L969.5 268.4 L970.0 268.2 L970.5 268.3 L971.0 269.7 L971.5 269.3 L972.0 270.3 L972.5 270.5 L973.0 270.2 L973.5 270.4 L974.0 269.4 L974.5 269.9 L975.0 267.7 L975.5 268.7 L976.0 267.8 L976.5 269.4 L977.0 268.0 L977.5 268.0 L978.0 267.9 L978.5 267.5 L979.0 267.3 L979.5 268.1 L980.0 267.6 L980.5 268.1 L981.0 269.2 L981.5 268.3 L982.0 269.1 L982.5 268.9 L983.0 270.4 L983.5 270.0 L984.0 270.0 L984.5 269.8 L985.0 269.0 L985.5 268.7 L986.0 269.1 L986.5 268.4 L987.0 267.9 L987.5 268.6 L988.0 268.1 L988.5 268.5 L989.0 269.6 L989.5 266.6 L990.0 267.6 L990.5 268.2 L991.0 268.2 L991.5 269.3 L992.0 268.8 L992.5 268.0 L993.0 268.1 L993.5 267.3 L994.0 268.1 L994.5 267.3 L995.0 266.9 L995.5 266.6 L996.0 268.8 L996.5 269.0 L997.0 270.1 L997.5 270.7 L998.0 270.3 L998.5 270.3 L999.0 270.6 L999.5 269.8 L1000.0 269.9 L1000.5 269.4 L1001.0 269.9 L1001.5 269.9 L1002.0 270.1 L1002.5 270.7 L1003.0 270.7 L1003.5 270.7 L1004.0 271.5 L1004.5 270.9 L1005.0 270.7 L1005.5 270.2 L1006.0 270.2 L1006.5 269.5 L1007.0 269.4 L1007.5 269.5 L1008.0 269.8 L1008.5 270.3 L1009.0 271.4 L1009.5 271.2 L1010.0 271.5 L1010.5 271.3 L1011.0 271.1 L1011.5 270.5 L1012.0 270.8 L1012.5 271.1 L1013.0 269.0 L1013.5 271.0 L1014.0 269.9 L1014.5 270.5 L1015.0 270.4 L1015.5 269.9 L1016.0 270.0 L1016.5 269.5 L1017.0 269.7 L1017.5 269.4 L1018.0 270.5 L1018.5 269.7 L1019.0 270.0 L1019.5 270.5 L1020.0 270.0 L1020.5 270.3 L1021.0 270.5 L1021.5 270.7 L1022.0 270.5 L1022.5 271.1 L1023.0 270.5 L1023.5 271.5 L1024.0 271.1 L1024.5 270.7 L1025.0 270.8 L1025.5 269.5 L1026.0 267.9 L1026.5 266.7 L1027.0 266.1 L1027.5 264.7 L1028.0 265.8 L1028.5 263.3 L1029.0 266.2 L1029.5 264.4 L1030.0 264.4 L1030.5 266.2 L1031.0 266.4 L1031.5 267.9 L1032.0 266.7 L1032.5 267.7 L1033.0 267.6 L1033.5 267.8 L1034.0 267.9 L1034.5 268.2 L1035.0 265.1 L1035.5 267.4 L1036.0 265.9 L1036.5 264.4 L1037.0 267.1 L1037.5 265.9 L1038.0 267.4 L1038.5 266.9 L1039.0 269.1 L1039.5 268.5 L1040.0 268.3 L1040.5 270.0 L1041.0 270.5 L1041.5 269.8 L1042.0 270.6 L1042.5 269.5 L1043.0 269.8 L1043.5 267.9 L1044.0 265.9 L1044.5 265.0 L1045.0 265.1 L1045.5 265.3 L1046.0 264.4 L1046.5 265.5 L1047.0 265.0 L1047.5 267.0 L1048.0 267.1 L1048.5 268.8 L1049.0 269.4 L1049.5 267.9 L1050.0 268.8 L1050.5 268.3 L1051.0 266.7 L1051.5 265.0 L1052.0 265.6 L1052.5 266.3 L1053.0 264.5 L1053.5 264.5 L1054.0 264.9 L1054.5 263.6 L1055.0 260.9 L1055.5 265.8 L1056.0 264.5 L1056.5 265.1 L1057.0 265.4 L1057.5 266.6 L1058.0 267.0 L1058.5 268.1 L1059.0 266.8 L1059.5 269.1 L1060.0 268.1 L1060.5 266.9 L1061.0 266.6 L1061.5 267.6 L1062.0 266.6 L1062.5 267.4 L1063.0 267.1 L1063.5 265.1 L1064.0 265.0 L1064.5 264.7 L1065.0 264.3 L1065.5 266.4 L1066.0 265.4 L1066.5 265.0 L1067.0 266.6 L1067.5 266.4 L1068.0 265.2 L1068.5 266.5 L1069.0 267.4 L1069.5 267.2 L1070.0 268.2 L1070.5 267.5 L1071.0 267.9 L1071.5 270.1 L1072.0 269.5 L1072.5 268.9 L1073.0 265.2 L1073.5 268.4 L1074.0 265.4 L1074.5 265.0 L1075.0 267.6 L1075.5 266.1 L1076.0 261.2 L1076.5 265.4 L1077.0 265.0 L1077.5 265.3 L1078.0 265.2 L1078.5 266.0 L1079.0 266.7 L1079.5 266.0 L1080.0 265.7 L1080.5 257.0 L1081.0 247.7 L1081.5 247.7 L1082.0 258.7 L1082.5 266.3 L1083.0 265.3 L1083.0 280.5 L1082.5 278.3 L1082.0 286.7 L1081.5 297.7 L1081.0 297.7 L1080.5 288.4 L1080.0 279.7 L1079.5 279.4 L1079.0 279.3 L1078.5 280.1 L1078.0 279.8 L1077.5 279.1 L1077.0 281.1 L1076.5 281.5 L1076.0 281.5 L1075.5 280.3 L1075.0 279.6 L1074.5 278.3 L1074.0 278.6 L1073.5 277.3 L1073.0 280.5 L1072.5 277.8 L1072.0 277.0 L1071.5 276.6 L1071.0 276.7 L1070.5 276.3 L1070.0 277.0 L1069.5 279.1 L1069.0 278.1 L1068.5 279.6 L1068.0 279.2 L1067.5 278.8 L1067.0 280.6 L1066.5 278.3 L1066.0 281.6 L1065.5 280.7 L1065.0 279.2 L1064.5 279.1 L1064.0 280.5 L1063.5 279.3 L1063.0 280.0 L1062.5 278.5 L1062.0 277.1 L1061.5 277.8 L1061.0 278.6 L1060.5 278.6 L1060.0 277.5 L1059.5 276.8 L1059.0 279.5 L1058.5 278.1 L1058.0 278.7 L1057.5 278.3 L1057.0 280.3 L1056.5 278.4 L1056.0 281.1 L1055.5 280.1 L1055.0 280.7 L1054.5 281.5 L1054.0 279.1 L1053.5 280.9 L1053.0 281.7 L1052.5 280.9 L1052.0 279.5 L1051.5 279.6 L1051.0 277.5 L1050.5 278.0 L1050.0 277.3 L1049.5 277.2 L1049.0 275.5 L1048.5 277.6 L1048.0 278.8 L1047.5 278.9 L1047.0 279.3 L1046.5 280.7 L1046.0 280.6 L1045.5 280.6 L1045.0 280.6 L1044.5 278.7 L1044.0 279.1 L1043.5 277.4 L1043.0 277.1 L1042.5 275.7 L1042.0 274.8 L1041.5 275.6 L1041.0 275.4 L1040.5 276.0 L1040.0 276.4 L1039.5 276.3 L1039.0 277.8 L1038.5 278.4 L1038.0 279.0 L1037.5 278.6 L1037.0 278.2 L1036.5 282.4 L1036.0 279.8 L1035.5 279.5 L1035.0 279.7 L1034.5 279.1 L1034.0 277.5 L1033.5 277.6 L1033.0 277.9 L1032.5 277.3 L1032.0 279.4 L1031.5 280.5 L1031.0 280.1 L1030.5 280.8 L1030.0 281.8 L1029.5 282.0 L1029.0 281.9 L1028.5 281.4 L1028.0 282.4 L1027.5 280.0 L1027.0 278.8 L1026.5 278.0 L1026.0 276.5 L1025.5 275.6 L1025.0 275.1 L1024.5 274.8 L1024.0 273.9 L1023.5 273.9 L1023.0 274.2 L1022.5 274.6 L1022.0 274.4 L1021.5 274.3 L1021.0 275.1 L1020.5 274.9 L1020.0 275.4 L1019.5 275.6 L1019.0 275.4 L1018.5 275.0 L1018.0 275.9 L1017.5 275.4 L1017.0 275.5 L1016.5 275.9 L1016.0 275.9 L1015.5 275.1 L1015.0 275.4 L1014.5 275.2 L1014.0 275.6 L1013.5 275.7 L1013.0 276.3 L1012.5 275.0 L1012.0 275.2 L1011.5 274.2 L1011.0 274.4 L1010.5 274.6 L1010.0 274.1 L1009.5 274.3 L1009.0 274.8 L1008.5 274.8 L1008.0 275.4 L1007.5 275.6 L1007.0 275.5 L1006.5 275.6 L1006.0 275.5 L1005.5 275.3 L1005.0 274.9 L1004.5 274.2 L1004.0 273.9 L1003.5 274.4 L1003.0 275.0 L1002.5 275.5 L1002.0 274.7 L1001.5 275.3 L1001.0 275.6 L1000.5 275.7 L1000.0 275.5 L999.5 275.0 L999.0 275.3 L998.5 275.0 L998.0 274.9 L997.5 274.5 L997.0 275.6 L996.5 276.0 L996.0 276.4 L995.5 279.3 L995.0 276.7 L994.5 276.9 L994.0 277.2 L993.5 276.0 L993.0 276.6 L992.5 277.1 L992.0 276.9 L991.5 276.2 L991.0 276.6 L990.5 277.7 L990.0 276.8 L989.5 278.8 L989.0 277.5 L988.5 276.9 L988.0 277.7 L987.5 277.0 L987.0 276.8 L986.5 276.8 L986.0 276.7 L985.5 275.4 L985.0 276.4 L984.5 275.1 L984.0 275.1 L983.5 275.2 L983.0 275.5 L982.5 276.0 L982.0 276.6 L981.5 277.2 L981.0 277.0 L980.5 276.3 L980.0 276.9 L979.5 277.2 L979.0 276.6 L978.5 277.4 L978.0 277.6 L977.5 277.4 L977.0 277.1 L976.5 276.7 L976.0 279.1 L975.5 277.2 L975.0 277.3 L974.5 276.4 L974.0 275.5 L973.5 275.9 L973.0 275.0 L972.5 274.3 L972.0 275.4 L971.5 275.6 L971.0 275.6 L970.5 276.6 L970.0 277.2 L969.5 276.9 L969.0 277.0 L968.5 276.9 L968.0 276.9 L967.5 276.5 L967.0 275.7 L966.5 275.1 L966.0 275.0 L965.5 275.1 L965.0 276.0 L964.5 275.5 L964.0 276.3 L963.5 277.6 L963.0 277.8 L962.5 277.5 L962.0 277.1 L961.5 277.4 L961.0 277.5 L960.5 276.3 L960.0 276.9 L959.5 278.9 L959.0 279.2 L958.5 280.6 L958.0 280.7 L957.5 281.3 L957.0 280.5 L956.5 277.9 L956.0 280.5 L955.5 278.8 L955.0 277.3 L954.5 277.8 L954.0 276.2 L953.5 276.7 L953.0 277.8 L952.5 278.0 L952.0 277.9 L951.5 280.2 L951.0 279.3 L950.5 278.5 L950.0 280.4 L949.5 279.7 L949.0 279.1 L948.5 279.5 L948.0 277.8 L947.5 278.4 L947.0 277.4 L946.5 276.9 L946.0 275.5 L945.5 276.1 L945.0 278.3 L944.5 279.0 L944.0 279.2 L943.5 280.4 L943.0 281.2 L942.5 281.9 L942.0 278.7 L941.5 282.6 L941.0 282.1 L940.5 279.0 L940.0 280.0 L939.5 279.3 L939.0 279.9 L938.5 283.7 L938.0 283.7 L937.5 283.7 L937.0 278.2 L936.5 279.6 L936.0 278.5 L935.5 278.6 L935.0 277.6 L934.5 280.0 L934.0 279.6 L933.5 279.2 L933.0 278.5 L932.5 277.0 L932.0 278.3 L931.5 278.6 L931.0 277.9 L930.5 275.6 L930.0 276.2 L929.5 276.2 L929.0 275.7 L928.5 275.6 L928.0 275.4 L927.5 276.1 L927.0 276.3 L926.5 276.8 L926.0 275.9 L925.5 276.3 L925.0 277.7 L924.5 276.2 L924.0 277.1 L923.5 277.2 L923.0 277.6 L922.5 277.9 L922.0 277.7 L921.5 278.0 L921.0 277.1 L920.5 277.5 L920.0 278.1 L919.5 279.6 L919.0 277.4 L918.5 277.0 L918.0 276.9 L917.5 278.4 L917.0 277.1 L916.5 278.0 L916.0 277.0 L915.5 277.0 L915.0 277.2 L914.5 277.7 L914.0 279.9 L913.5 280.2 L913.0 279.0 L912.5 278.9 L912.0 277.3 L911.5 278.4 L911.0 277.6 L910.5 276.3 L910.0 274.9 L909.5 275.3 L909.0 276.3 L908.5 275.3 L908.0 274.7 L907.5 274.0 L907.0 274.1 L906.5 274.2 L906.0 274.3 L905.5 274.6 L905.0 275.0 L904.5 275.2 L904.0 275.3 L903.5 275.1 L903.0 275.5 L902.5 275.6 L902.0 275.8 L901.5 276.7 L901.0 276.0 L900.5 278.4 L900.0 279.8 L899.5 279.7 L899.0 281.6 L898.5 281.5 L898.0 281.1 L897.5 281.0 L897.0 279.0 L896.5 279.9 L896.0 277.8 L895.5 277.3 L895.0 277.4 L894.5 279.4 L894.0 276.5 L893.5 276.2 L893.0 277.1 L892.5 278.0 L892.0 279.1 L891.5 277.2 L891.0 280.1 L890.5 277.9 L890.0 279.3 L889.5 281.2 L889.0 278.5 L888.5 281.6 L888.0 281.1 L887.5 279.5 L887.0 278.7 L886.5 279.4 L886.0 280.0 L885.5 280.8 L885.0 276.9 L884.5 278.7 L884.0 276.8 L883.5 276.9 L883.0 277.1 L882.5 277.6 L882.0 277.8 L881.5 277.6 L881.0 278.8 L880.5 280.7 L880.0 280.0 L879.5 280.0 L879.0 280.0 L878.5 279.6 L878.0 277.6 L877.5 276.0 L877.0 276.7 L876.5 275.3 L876.0 275.3 L875.5 274.7 L875.0 274.0 L874.5 275.2 L874.0 275.5 L873.5 275.8 L873.0 276.1 L872.5 275.3 L872.0 276.0 L871.5 275.3 L871.0 275.4 L870.5 275.5 L870.0 274.7 L869.5 275.2 L869.0 274.6 L868.5 274.8 L868.0 274.2 L867.5 274.9 L867.0 274.8 L866.5 274.9 L866.0 275.7 L865.5 275.1 L865.0 276.3 L864.5 275.3 L864.0 276.4 L863.5 276.7 L863.0 277.3 L862.5 277.5 L862.0 277.9 L861.5 278.2 L861.0 277.1 L860.5 278.5 L860.0 277.9 L859.5 278.2 L859.0 278.4 L858.5 278.9 L858.0 277.9 L857.5 279.6 L857.0 277.8 L856.5 277.2 L856.0 277.2 L855.5 277.5 L855.0 279.1 L854.5 280.3 L854.0 281.3 L853.5 281.6 L853.0 279.9 L852.5 280.5 L852.0 279.9 L851.5 280.4 L851.0 280.0 L850.5 276.3 L850.0 278.2 L849.5 278.1 L849.0 279.3 L848.5 279.3 L848.0 278.8 L847.5 280.3 L847.0 279.8 L846.5 281.4 L846.0 278.6 L845.5 280.0 L845.0 281.3 L844.5 282.4 L844.0 280.9 L843.5 279.4 L843.0 279.8 L842.5 278.8 L842.0 280.8 L841.5 282.6 L841.0 280.0 L840.5 278.6 L840.0 278.7 L839.5 279.2 L839.0 278.4 L838.5 277.3 L838.0 276.3 L837.5 276.8 L837.0 278.0 L836.5 276.9 L836.0 278.7 L835.5 279.1 L835.0 279.6 L834.5 280.6 L834.0 278.6 L833.5 281.5 L833.0 280.6 L832.5 280.7 L832.0 282.2 L831.5 284.7 L831.0 280.3 L830.5 281.6 L830.0 281.0 L829.5 279.0 L829.0 279.7 L828.5 280.7 L828.0 279.9 L827.5 279.0 L827.0 277.3 L826.5 276.8 L826.0 275.8 L825.5 275.4 L825.0 276.8 L824.5 275.9 L824.0 275.6 L823.5 277.4 L823.0 277.0 L822.5 277.3 L822.0 277.2 L821.5 276.9 L821.0 277.7 L820.5 277.9 L820.0 279.3 L819.5 277.3 L819.0 277.1 L818.5 277.9 L818.0 277.3 L817.5 277.6 L817.0 277.3 L816.5 277.3 L816.0 275.7 L815.5 277.6 L815.0 276.3 L814.5 274.6 L814.0 275.2 L813.5 274.8 L813.0 277.6 L812.5 275.9 L812.0 276.1 L811.5 277.9 L811.0 276.6 L810.5 277.9 L810.0 277.7 L809.5 277.5 L809.0 276.9 L808.5 278.0 L808.0 275.3 L807.5 275.4 L807.0 276.0 L806.5 277.5 L806.0 276.6 L805.5 280.9 L805.0 285.7 L804.5 285.7 L804.0 280.7 L803.5 281.2 L803.0 280.8 L802.5 280.9 L802.0 282.2 L801.5 282.9 L801.0 285.2 L800.5 281.8 L800.0 280.4 L799.5 281.9 L799.0 281.0 L798.5 280.3 L798.0 282.1 L797.5 276.9 L797.0 276.8 L796.5 275.9 L796.0 275.5 L795.5 275.4 L795.0 275.0 L794.5 275.4 L794.0 275.3 L793.5 274.8 L793.0 274.8 L792.5 275.7 L792.0 275.6 L791.5 275.4 L791.0 275.0 L790.5 275.1 L790.0 274.7 L789.5 275.1 L789.0 274.7 L788.5 275.4 L788.0 274.9 L787.5 274.9 L787.0 274.4 L786.5 274.1 L786.0 274.0 L785.5 274.5 L785.0 275.0 L784.5 275.0 L784.0 275.3 L783.5 274.8 L783.0 275.9 L782.5 276.3 L782.0 276.5 L781.5 277.5 L781.0 276.6 L780.5 277.4 L780.0 278.1 L779.5 278.4 L779.0 277.2 L778.5 277.3 L778.0 276.1 L777.5 276.0 L777.0 277.6 L776.5 279.7 L776.0 281.1 L775.5 282.2 L775.0 283.1 L774.5 283.4 L774.0 281.4 L773.5 282.3 L773.0 281.6 L772.5 281.7 L772.0 279.5 L771.5 286.7 L771.0 286.7 L770.5 286.7 L770.0 279.3 L769.5 277.7 L769.0 278.3 L768.5 278.2 L768.0 285.7 L767.5 285.7 L767.0 285.7 L766.5 279.2 L766.0 279.2 L765.5 278.6 L765.0 277.2 L764.5 277.0 L764.0 275.3 L763.5 275.7 L763.0 275.8 L762.5 275.7 L762.0 275.9 L761.5 275.6 L761.0 275.6 L760.5 275.3 L760.0 274.9 L759.5 275.2 L759.0 275.0 L758.5 275.8 L758.0 274.9 L757.5 274.7 L757.0 275.1 L756.5 273.9 L756.0 274.2 L755.5 274.4 L755.0 274.4 L754.5 274.8 L754.0 275.1 L753.5 274.8 L753.0 275.4 L752.5 275.9 L752.0 276.4 L751.5 277.0 L751.0 278.3 L750.5 278.7 L750.0 280.3 L749.5 281.0 L749.0 279.5 L748.5 279.5 L748.0 282.4 L747.5 281.4 L747.0 282.1 L746.5 280.3 L746.0 279.0 L745.5 277.6 L745.0 277.6 L744.5 278.2 L744.0 278.5 L743.5 277.3 L743.0 276.2 L742.5 276.0 L742.0 278.0 L741.5 278.0 L741.0 278.5 L740.5 279.3 L740.0 280.1 L739.5 281.7 L739.0 279.2 L738.5 280.9 L738.0 278.1 L737.5 278.4 L737.0 278.7 L736.5 280.4 L736.0 280.3 L735.5 280.8 L735.0 279.0 L734.5 279.9 L734.0 279.2 L733.5 279.2 L733.0 278.4 L732.5 277.5 L732.0 276.4 L731.5 276.6 L731.0 276.4 L730.5 278.1 L730.0 278.8 L729.5 279.0 L729.0 279.3 L728.5 279.9 L728.0 283.9 L727.5 281.4 L727.0 280.6 L726.5 279.2 L726.0 279.4 L725.5 279.1 L725.0 278.6 L724.5 277.0 L724.0 277.6 L723.5 277.5 L723.0 279.8 L722.5 276.6 L722.0 278.3 L721.5 278.6 L721.0 278.5 L720.5 277.8 L720.0 278.8 L719.5 279.1 L719.0 278.7 L718.5 278.8 L718.0 279.2 L717.5 277.5 L717.0 278.3 L716.5 279.4 L716.0 278.7 L715.5 279.3 L715.0 277.3 L714.5 278.2 L714.0 278.1 L713.5 278.1 L713.0 276.0 L712.5 277.4 L712.0 276.6 L711.5 276.2 L711.0 275.6 L710.5 276.3 L710.0 276.4 L709.5 277.9 L709.0 278.2 L708.5 277.9 L708.0 278.8 L707.5 279.4 L707.0 278.0 L706.5 278.6 L706.0 278.6 L705.5 277.6 L705.0 278.6 L704.5 275.0 L704.0 276.1 L703.5 275.7 L703.0 278.2 L702.5 277.3 L702.0 278.7 L701.5 278.2 L701.0 279.6 L700.5 277.7 L700.0 277.3 L699.5 276.9 L699.0 277.0 L698.5 276.8 L698.0 278.9 L697.5 279.5 L697.0 279.2 L696.5 281.7 L696.0 280.6 L695.5 282.0 L695.0 281.7 L694.5 281.7 L694.0 277.6 L693.5 277.3 L693.0 277.7 L692.5 279.1 L692.0 277.9 L691.5 280.1 L691.0 280.0 L690.5 280.3 L690.0 280.4 L689.5 278.8 L689.0 283.4 L688.5 289.7 L688.0 289.7 L687.5 282.2 L687.0 277.9 L686.5 278.8 L686.0 278.7 L685.5 279.5 L685.0 277.7 L684.5 277.2 L684.0 276.1 L683.5 274.9 L683.0 276.1 L682.5 276.0 L682.0 277.3 L681.5 280.4 L681.0 278.4 L680.5 279.5 L680.0 279.3 L679.5 279.8 L679.0 281.6 L678.5 277.5 L678.0 278.1 L677.5 279.6 L677.0 276.9 L676.5 276.9 L676.0 276.8 L675.5 275.2 L675.0 276.7 L674.5 275.6 L674.0 276.3 L673.5 276.6 L673.0 277.5 L672.5 278.0 L672.0 278.3 L671.5 277.9 L671.0 278.2 L670.5 279.2 L670.0 276.5 L669.5 277.6 L669.0 277.3 L668.5 279.2 L668.0 279.2 L667.5 278.7 L667.0 277.7 L666.5 278.2 L666.0 278.4 L665.5 278.0 L665.0 277.2 L664.5 277.1 L664.0 277.9 L663.5 276.2 L663.0 275.9 L662.5 277.9 L662.0 278.2 L661.5 278.9 L661.0 278.9 L660.5 279.9 L660.0 279.3 L659.5 279.7 L659.0 278.3 L658.5 277.3 L658.0 277.2 L657.5 276.1 L657.0 276.7 L656.5 276.1 L656.0 275.8 L655.5 275.9 L655.0 276.1 L654.5 276.6 L654.0 276.6 L653.5 278.1 L653.0 276.7 L652.5 276.3 L652.0 277.9 L651.5 276.8 L651.0 276.4 L650.5 277.1 L650.0 275.7 L649.5 276.3 L649.0 276.6 L648.5 275.3 L648.0 276.1 L647.5 275.6 L647.0 276.2 L646.5 274.5 L646.0 275.0 L645.5 274.7 L645.0 274.9 L644.5 274.7 L644.0 274.9 L643.5 276.0 L643.0 276.5 L642.5 277.0 L642.0 278.4 L641.5 278.9 L641.0 278.1 L640.5 279.9 L640.0 277.8 L639.5 279.9 L639.0 280.6 L638.5 281.9 L638.0 282.5 L637.5 281.3 L637.0 279.8 L636.5 280.8 L636.0 281.3 L635.5 279.7 L635.0 279.9 L634.5 278.7 L634.0 277.9 L633.5 276.4 L633.0 278.1 L632.5 280.4 L632.0 279.4 L631.5 281.0 L631.0 281.5 L630.5 278.9 L630.0 280.4 L629.5 279.4 L629.0 278.9 L628.5 276.7 L628.0 276.6 L627.5 276.3 L627.0 277.6 L626.5 277.6 L626.0 277.3 L625.5 277.2 L625.0 278.9 L624.5 277.0 L624.0 278.5 L623.5 277.1 L623.0 278.0 L622.5 277.1 L622.0 279.3 L621.5 278.0 L621.0 279.2 L620.5 278.8 L620.0 277.9 L619.5 277.5 L619.0 278.8 L618.5 278.6 L618.0 278.2 L617.5 277.4 L617.0 277.6 L616.5 276.0 L616.0 277.1 L615.5 275.4 L615.0 276.0 L614.5 275.2 L614.0 275.5 L613.5 278.7 L613.0 279.4 L612.5 277.7 L612.0 279.5 L611.5 278.8 L611.0 278.8 L610.5 278.8 L610.0 276.9 L609.5 277.4 L609.0 275.3 L608.5 277.1 L608.0 278.0 L607.5 277.7 L607.0 276.6 L606.5 278.2 L606.0 280.0 L605.5 279.0 L605.0 280.8 L604.5 279.9 L604.0 281.2 L603.5 281.7 L603.0 281.6 L602.5 280.6 L602.0 284.3 L601.5 279.0 L601.0 280.6 L600.5 280.0 L600.0 279.1 L599.5 279.1 L599.0 278.4 L598.5 277.4 L598.0 276.4 L597.5 276.6 L597.0 276.5 L596.5 278.8 L596.0 280.0 L595.5 278.7 L595.0 277.5 L594.5 278.3 L594.0 279.5 L593.5 278.1 L593.0 279.9 L592.5 280.0 L592.0 279.0 L591.5 278.1 L591.0 278.1 L590.5 277.6 L590.0 276.1 L589.5 276.1 L589.0 275.1 L588.5 275.2 L588.0 276.8 L587.5 278.2 L587.0 279.4 L586.5 279.6 L586.0 278.5 L585.5 279.1 L585.0 280.8 L584.5 279.3 L584.0 280.3 L583.5 280.0 L583.0 280.4 L582.5 279.5 L582.0 279.6 L581.5 278.0 L581.0 277.7 L580.5 276.3 L580.0 276.1 L579.5 278.6 L579.0 278.7 L578.5 279.7 L578.0 279.9 L577.5 280.5 L577.0 281.1 L576.5 280.1 L576.0 278.5 L575.5 278.9 L575.0 281.0 L574.5 280.7 L574.0 279.3 L573.5 278.9 L573.0 278.9 L572.5 276.6 L572.0 277.2 L571.5 276.9 L571.0 276.2 L570.5 277.3 L570.0 279.0 L569.5 277.9 L569.0 279.2 L568.5 278.6 L568.0 278.4 L567.5 280.0 L567.0 280.3 L566.5 278.3 L566.0 280.0 L565.5 279.7 L565.0 278.9 L564.5 278.3 L564.0 279.7 L563.5 279.3 L563.0 277.6 L562.5 279.1 L562.0 278.5 L561.5 278.5 L561.0 278.4 L560.5 277.4 L560.0 276.8 L559.5 277.0 L559.0 275.9 L558.5 275.6 L558.0 278.3 L557.5 276.3 L557.0 279.0 L556.5 278.5 L556.0 279.2 L555.5 280.1 L555.0 279.8 L554.5 278.6 L554.0 280.5 L553.5 281.1 L553.0 280.6 L552.5 279.8 L552.0 278.0 L551.5 278.1 L551.0 276.9 L550.5 278.4 L550.0 279.2 L549.5 281.7 L549.0 281.7 L548.5 281.7 L548.0 280.7 L547.5 278.5 L547.0 281.6 L546.5 280.7 L546.0 279.5 L545.5 279.2 L545.0 278.9 L544.5 280.3 L544.0 279.0 L543.5 276.2 L543.0 277.8 L542.5 276.4 L542.0 276.5 L541.5 278.8 L541.0 280.6 L540.5 280.0 L540.0 278.6 L539.5 280.5 L539.0 279.0 L538.5 279.0 L538.0 284.0 L537.5 280.4 L537.0 278.4 L536.5 279.7 L536.0 280.9 L535.5 278.9 L535.0 277.7 L534.5 278.2 L534.0 278.3 L533.5 277.3 L533.0 277.4 L532.5 276.8 L532.0 276.2 L531.5 277.6 L531.0 276.6 L530.5 281.4 L530.0 279.9 L529.5 278.8 L529.0 279.5 L528.5 279.4 L528.0 280.2 L527.5 277.4 L527.0 275.9 L526.5 276.4 L526.0 276.2 L525.5 277.7 L525.0 277.8 L524.5 279.4 L524.0 279.3 L523.5 278.7 L523.0 278.9 L522.5 278.3 L522.0 279.8 L521.5 279.1 L521.0 279.4 L520.5 279.4 L520.0 278.0 L519.5 277.9 L519.0 277.3 L518.5 277.6 L518.0 277.1 L517.5 276.6 L517.0 276.1 L516.5 275.1 L516.0 276.5 L515.5 278.1 L515.0 276.8 L514.5 277.5 L514.0 277.7 L513.5 278.9 L513.0 279.4 L512.5 277.6 L512.0 279.0 L511.5 277.1 L511.0 280.2 L510.5 278.4 L510.0 276.9 L509.5 277.4 L509.0 276.3 L508.5 276.5 L508.0 277.3 L507.5 279.1 L507.0 278.2 L506.5 279.7 L506.0 279.5 L505.5 278.7 L505.0 279.7 L504.5 281.4 L504.0 278.2 L503.5 277.1 L503.0 275.7 L502.5 278.1 L502.0 277.4 L501.5 277.2 L501.0 278.9 L500.5 280.3 L500.0 278.3 L499.5 280.8 L499.0 279.5 L498.5 277.9 L498.0 277.7 L497.5 277.5 L497.0 276.2 L496.5 277.3 L496.0 278.1 L495.5 278.5 L495.0 278.4 L494.5 280.0 L494.0 279.4 L493.5 279.9 L493.0 278.6 L492.5 278.4 L492.0 281.2 L491.5 278.4 L491.0 277.2 L490.5 276.2 L490.0 276.6 L489.5 276.8 L489.0 277.7 L488.5 279.1 L488.0 279.6 L487.5 279.8 L487.0 279.7 L486.5 279.3 L486.0 280.0 L485.5 280.2 L485.0 279.1 L484.5 278.3 L484.0 277.9 L483.5 278.4 L483.0 277.1 L482.5 276.0 L482.0 276.1 L481.5 276.9 L481.0 277.3 L480.5 277.9 L480.0 279.0 L479.5 277.4 L479.0 279.1 L478.5 279.2 L478.0 279.8 L477.5 279.6 L477.0 277.8 L476.5 277.6 L476.0 278.0 L475.5 278.0 L475.0 276.9 L474.5 275.1 L474.0 275.6 L473.5 276.7 L473.0 277.9 L472.5 277.0 L472.0 277.0 L471.5 278.0 L471.0 276.8 L470.5 278.0 L470.0 279.5 L469.5 278.3 L469.0 278.5 L468.5 277.3 L468.0 274.9 L467.5 275.3 L467.0 276.1 L466.5 274.9 L466.0 275.1 L465.5 275.9 L465.0 276.4 L464.5 275.7 L464.0 277.0 L463.5 276.6 L463.0 277.2 L462.5 277.2 L462.0 276.9 L461.5 281.7 L461.0 281.7 L460.5 281.7 L460.0 278.6 L459.5 279.3 L459.0 279.5 L458.5 278.7 L458.0 278.8 L457.5 280.4 L457.0 279.6 L456.5 280.3 L456.0 286.4 L455.5 292.3 L455.0 292.3 L454.5 282.3 L454.0 280.2 L453.5 278.6 L453.0 278.6 L452.5 278.6 L452.0 278.6 L451.5 277.0 L451.0 276.8 L450.5 276.1 L450.0 276.9 L449.5 275.9 L449.0 275.7 L448.5 275.3 L448.0 275.1 L447.5 274.8 L447.0 274.6 L446.5 276.1 L446.0 275.8 L445.5 276.9 L445.0 275.8 L444.5 275.8 L444.0 276.6 L443.5 277.6 L443.0 277.9 L442.5 277.2 L442.0 278.2 L441.5 276.5 L441.0 278.1 L440.5 277.5 L440.0 276.4 L439.5 275.9 L439.0 275.8 L438.5 275.9 L438.0 277.1 L437.5 276.5 L437.0 276.4 L436.5 275.8 L436.0 276.6 L435.5 277.1 L435.0 278.6 L434.5 278.7 L434.0 278.9 L433.5 279.2 L433.0 279.0 L432.5 279.0 L432.0 277.6 L431.5 276.9 L431.0 276.0 L430.5 277.3 L430.0 276.7 L429.5 277.6 L429.0 276.6 L428.5 276.7 L428.0 276.5 L427.5 277.3 L427.0 276.9 L426.5 276.6 L426.0 275.2 L425.5 276.0 L425.0 277.2 L424.5 275.9 L424.0 275.3 L423.5 274.4 L423.0 275.4 L422.5 275.9 L422.0 276.9 L421.5 277.5 L421.0 276.4 L420.5 279.4 L420.0 280.1 L419.5 279.1 L419.0 280.9 L418.5 278.3 L418.0 280.2 L417.5 279.0 L417.0 278.8 L416.5 278.0 L416.0 278.8 L415.5 277.6 L415.0 279.0 L414.5 277.8 L414.0 280.4 L413.5 281.0 L413.0 279.5 L412.5 280.7 L412.0 280.5 L411.5 281.8 L411.0 279.1 L410.5 282.2 L410.0 281.7 L409.5 281.8 L409.0 281.6 L408.5 279.7 L408.0 278.7 L407.5 280.6 L407.0 278.3 L406.5 279.1 L406.0 278.5 L405.5 277.7 L405.0 276.7 L404.5 277.4 L404.0 278.7 L403.5 279.4 L403.0 278.9 L402.5 280.4 L402.0 279.7 L401.5 279.7 L401.0 281.9 L400.5 281.3 L400.0 282.9 L399.5 280.0 L399.0 279.9 L398.5 279.9 L398.0 280.3 L397.5 279.8 L397.0 279.3 L396.5 278.1 L396.0 277.0 L395.5 277.3 L395.0 276.6 L394.5 278.4 L394.0 277.8 L393.5 279.0 L393.0 278.1 L392.5 279.1 L392.0 276.7 L391.5 278.4 L391.0 278.6 L390.5 278.2 L390.0 279.0 L389.5 277.3 L389.0 279.2 L388.5 276.8 L388.0 279.7 L387.5 279.7 L387.0 278.7 L386.5 279.1 L386.0 278.2 L385.5 279.4 L385.0 277.8 L384.5 277.9 L384.0 278.6 L383.5 277.9 L383.0 276.8 L382.5 276.4 L382.0 276.0 L381.5 274.8 L381.0 275.5 L380.5 277.0 L380.0 277.9 L379.5 278.4 L379.0 279.0 L378.5 279.2 L378.0 279.4 L377.5 278.8 L377.0 279.0 L376.5 279.2 L376.0 279.0 L375.5 278.8 L375.0 277.5 L374.5 277.2 L374.0 276.3 L373.5 276.2 L373.0 277.0 L372.5 275.8 L372.0 278.2 L371.5 278.0 L371.0 278.9 L370.5 278.5 L370.0 278.1 L369.5 278.3 L369.0 279.2 L368.5 279.4 L368.0 278.8 L367.5 279.4 L367.0 277.4 L366.5 280.0 L366.0 277.9 L365.5 279.6 L365.0 279.0 L364.5 277.3 L364.0 277.3 L363.5 278.7 L363.0 278.7 L362.5 277.7 L362.0 277.0 L361.5 276.4 L361.0 275.5 L360.5 275.5 L360.0 275.0 L359.5 275.8 L359.0 275.9 L358.5 276.4 L358.0 276.0 L357.5 277.5 L357.0 280.6 L356.5 279.2 L356.0 279.5 L355.5 281.7 L355.0 280.3 L354.5 280.1 L354.0 280.9 L353.5 281.3 L353.0 279.5 L352.5 281.2 L352.0 279.8 L351.5 280.1 L351.0 279.0 L350.5 279.7 L350.0 278.5 L349.5 277.4 L349.0 278.4 L348.5 277.9 L348.0 277.2 L347.5 275.3 L347.0 276.2 L346.5 278.1 L346.0 277.3 L345.5 280.3 L345.0 278.8 L344.5 280.2 L344.0 280.5 L343.5 282.1 L343.0 281.9 L342.5 280.6 L342.0 278.5 L341.5 278.5 L341.0 278.4 L340.5 279.0 L340.0 278.5 L339.5 278.3 L339.0 277.8 L338.5 278.6 L338.0 278.0 L337.5 278.1 L337.0 278.6 L336.5 278.8 L336.0 278.7 L335.5 278.3 L335.0 277.5 L334.5 277.1 L334.0 275.7 L333.5 275.6 L333.0 276.0 L332.5 276.2 L332.0 277.4 L331.5 276.9 L331.0 277.1 L330.5 277.7 L330.0 278.1 L329.5 279.0 L329.0 277.9 L328.5 278.4 L328.0 277.0 L327.5 278.0 L327.0 279.5 L326.5 278.3 L326.0 277.8 L325.5 278.4 L325.0 278.6 L324.5 278.4 L324.0 278.6 L323.5 277.6 L323.0 278.6 L322.5 278.0 L322.0 277.0 L321.5 278.4 L321.0 277.8 L320.5 275.9 L320.0 277.0 L319.5 277.5 L319.0 279.6 L318.5 280.6 L318.0 279.1 L317.5 279.7 L317.0 279.8 L316.5 279.0 L316.0 277.2 L315.5 276.8 L315.0 276.2 L314.5 278.4 L314.0 279.5 L313.5 277.7 L313.0 280.2 L312.5 278.9 L312.0 281.1 L311.5 279.6 L311.0 279.6 L310.5 279.1 L310.0 277.2 L309.5 279.8 L309.0 289.7 L308.5 289.7 L308.0 289.7 L307.5 279.8 L307.0 279.0 L306.5 281.9 L306.0 278.2 L305.5 279.0 L305.0 280.1 L304.5 279.3 L304.0 280.2 L303.5 278.9 L303.0 279.7 L302.5 280.9 L302.0 279.4 L301.5 278.4 L301.0 277.0 L300.5 276.4 L300.0 277.0 L299.5 276.0 L299.0 276.0 L298.5 276.5 L298.0 276.6 L297.5 278.3 L297.0 278.1 L296.5 278.5 L296.0 279.2 L295.5 279.3 L295.0 280.3 L294.5 278.0 L294.0 277.5 L293.5 277.4 L293.0 276.1 L292.5 276.0 L292.0 276.6 L291.5 278.0 L291.0 279.3 L290.5 280.1 L290.0 278.8 L289.5 280.7 L289.0 278.7 L288.5 281.5 L288.0 281.9 L287.5 284.3 L287.0 282.8 L286.5 282.3 L286.0 281.3 L285.5 282.1 L285.0 281.0 L284.5 280.9 L284.0 278.7 L283.5 278.5 L283.0 280.3 L282.5 279.4 L282.0 278.7 L281.5 278.2 L281.0 275.8 L280.5 275.9 L280.0 277.7 L279.5 278.5 L279.0 277.8 L278.5 278.6 L278.0 279.7 L277.5 277.7 L277.0 277.7 L276.5 277.6 L276.0 278.3 L275.5 279.4 L275.0 277.9 L274.5 276.3 L274.0 275.3 L273.5 276.6 L273.0 276.1 L272.5 276.9 L272.0 277.3 L271.5 278.3 L271.0 277.8 L270.5 277.8 L270.0 277.9 L269.5 279.6 L269.0 278.9 L268.5 279.4 L268.0 278.8 L267.5 279.0 L267.0 280.1 L266.5 279.9 L266.0 279.0 L265.5 279.1 L265.0 276.8 L264.5 277.6 L264.0 279.9 L263.5 277.6 L263.0 277.3 L262.5 275.2 L262.0 276.5 L261.5 276.7 L261.0 276.2 L260.5 277.8 L260.0 277.3 L259.5 277.7 L259.0 277.5 L258.5 278.8 L258.0 277.5 L257.5 279.0 L257.0 277.3 L256.5 280.1 L256.0 279.6 L255.5 279.6 L255.0 278.6 L254.5 279.9 L254.0 279.4 L253.5 278.1 L253.0 279.2 L252.5 278.6 L252.0 278.0 L251.5 277.2 L251.0 277.4 L250.5 276.0 L250.0 276.2 L249.5 275.9 L249.0 275.0 L248.5 276.9 L248.0 277.1 L247.5 278.5 L247.0 277.7 L246.5 278.2 L246.0 279.7 L245.5 279.7 L245.0 278.2 L244.5 278.5 L244.0 278.7 L243.5 277.4 L243.0 278.6 L242.5 276.4 L242.0 276.1 L241.5 276.2 L241.0 276.2 L240.5 276.4 L240.0 277.3 L239.5 279.1 L239.0 279.8 L238.5 277.3 L238.0 278.8 L237.5 277.5 L237.0 278.1 L236.5 278.5 L236.0 276.9 L235.5 277.8 L235.0 276.5 L234.5 277.1 L234.0 276.1 L233.5 277.0 L233.0 276.9 L232.5 280.5 L232.0 279.2 L231.5 279.2 L231.0 279.1 L230.5 278.7 L230.0 277.2 L229.5 276.0 L229.0 276.2 L228.5 277.0 L228.0 277.7 L227.5 278.4 L227.0 279.3 L226.5 279.2 L226.0 280.3 L225.5 280.5 L225.0 286.7 L224.5 286.7 L224.0 286.7 L223.5 282.9 L223.0 291.7 L222.5 291.7 L222.0 291.7 L221.5 282.7 L221.0 282.7 L220.5 282.7 L220.0 282.7 L219.5 282.7 L219.0 282.7 L218.5 278.9 L218.0 286.7 L217.5 286.7 L217.0 286.7 L216.5 282.5 L216.0 284.7 L215.5 284.7 L215.0 284.7 L214.5 282.9 L214.0 285.7 L213.5 283.7 L213.0 284.6 L212.5 281.5 L212.0 293.7 L211.5 293.7 L211.0 293.7 L210.5 281.5 L210.0 277.8 L209.5 284.7 L209.0 284.7 L208.5 284.7 L208.0 285.7 L207.5 285.7 L207.0 285.7 L206.5 283.0 L206.0 287.7 L205.5 287.7 L205.0 287.7 L204.5 282.4 L204.0 281.1 L203.5 292.7 L203.0 292.7 L202.5 292.7 L202.0 309.7 L201.5 309.7 L201.0 309.7 L200.5 288.2 L200.0 284.7 L199.5 284.7 L199.0 284.7 L198.5 280.3 L198.0 284.3 L197.5 280.8 L197.0 278.8 L196.5 279.3 L196.0 278.5 L195.5 278.7 L195.0 279.3 L194.5 277.0 L194.0 276.5 L193.5 276.1 L193.0 279.4 L192.5 288.7 L192.0 288.7 L191.5 288.7 L191.0 279.4 L190.5 277.6 L190.0 278.4 L189.5 277.5 L189.0 276.5 L188.5 277.5 L188.0 277.4 L187.5 276.2 L187.0 275.4 L186.5 275.1 L186.0 276.4 L185.5 276.5 L185.0 277.2 L184.5 278.2 L184.0 278.7 L183.5 278.3 L183.0 279.4 L182.5 279.7 L182.0 279.4 L181.5 280.1 L181.0 279.7 L180.5 279.4 L180.0 279.3 L179.5 280.9 L179.0 278.6 L178.5 277.8 L178.0 275.9 L177.5 278.1 L177.0 278.5 L176.5 278.3 L176.0 278.1 L175.5 278.0 L175.0 279.0 L174.5 277.6 L174.0 278.2 L173.5 277.1 L173.0 277.3 L172.5 277.0 L172.0 278.3 L171.5 278.2 L171.0 278.1 L170.5 277.9 L170.0 276.9 L169.5 278.0 L169.0 278.8 L168.5 279.2 L168.0 278.8 L167.5 277.5 L167.0 278.6 L166.5 278.4 L166.0 277.0 L165.5 277.5 L165.0 276.1 L164.5 275.8 L164.0 276.8 L163.5 276.1 L163.0 274.9 L162.5 275.3 L162.0 275.8 L161.5 276.1 L161.0 275.5 L160.5 277.0 L160.0 277.0 L159.5 276.4 L159.0 276.9 L158.5 276.0 L158.0 277.3 L157.5 277.7 L157.0 277.6 L156.5 276.7 L156.0 277.1 L155.5 279.2 L155.0 277.4 L154.5 279.1 L154.0 276.9 L153.5 278.0 L153.0 278.0 L152.5 277.9 L152.0 278.4 L151.5 277.6 L151.0 277.9 L150.5 277.6 L150.0 277.3 L149.5 276.5 L149.0 277.1 L148.5 276.7 L148.0 276.9 L147.5 281.2 L147.0 280.0 L146.5 279.6 L146.0 279.5 L145.5 278.9 L145.0 278.5 L144.5 278.7 L144.0 278.4 L143.5 278.2 L143.0 278.3 L142.5 277.3 L142.0 277.3 L141.5 276.7 L141.0 275.9 L140.5 275.6 L140.0 275.6 L139.5 275.7 L139.0 277.4 L138.5 280.0 L138.0 278.4 L137.5 278.3 L137.0 280.0 L136.5 277.0 L136.0 278.2 L135.5 276.2 L135.0 275.9 L134.5 275.1 L134.0 276.4 L133.5 276.0 L133.0 278.8 L132.5 277.8 L132.0 278.2 L131.5 276.9 L131.0 277.6 L130.5 279.3 L130.0 278.1 L129.5 279.2 L129.0 279.4 L128.5 278.8 L128.0 277.9 L127.5 278.4 L127.0 278.6 L126.5 278.4 L126.0 277.1 L125.5 277.6 L125.0 277.1 L124.5 276.7 L124.0 276.8 L123.5 277.7 L123.0 276.1 L122.5 277.0 L122.0 276.1 L121.5 275.7 L121.0 276.3 L120.5 275.9 L120.0 277.7 L119.5 278.3 L119.0 277.9 L118.5 278.9 L118.0 280.4 L117.5 280.5 L117.0 279.3 L116.5 280.5 L116.0 281.6 L115.5 279.5 L115.0 280.3 L114.5 280.3 L114.0 279.8 L113.5 279.1 L113.0 279.3 L112.5 278.5 L112.0 278.1 L111.5 277.0 L111.0 276.3 L110.5 275.5 L110.0 275.2 L109.5 275.5 L109.0 274.9 L108.5 275.0 L108.0 275.6 L107.5 275.9 L107.0 275.6 L106.5 276.5 L106.0 277.1 L105.5 278.6 L105.0 278.8 L104.5 277.5 L104.0 280.6 L103.5 279.1 L103.0 280.3 L102.5 280.5 L102.0 278.8 L101.5 281.1 L101.0 280.3 L100.5 279.0 L100.0 278.7 L99.5 279.6 L99.0 277.4 L98.5 277.7 L98.0 277.9 L97.5 277.2 L97.0 276.3 L96.5 275.2 L96.0 275.8 L95.5 277.1 L95.0 277.3 L94.5 277.6 L94.0 276.8 L93.5 278.5 L93.0 279.2 L92.5 279.4 L92.0 279.6 L91.5 279.8 L91.0 279.6 L90.5 280.4 L90.0 280.7 L89.5 281.0 L89.0 278.4 L88.5 280.5 L88.0 277.7 L87.5 282.8 L87.0 278.2 L86.5 279.4 L86.0 278.3 L85.5 279.4 L85.0 278.9 L84.5 276.3 L84.0 277.2 L83.5 277.1 L83.0 277.5 L82.5 279.4 L82.0 280.1 L81.5 278.1 L81.0 280.5 L80.5 280.8 L80.0 279.2 L79.5 278.8 L79.0 280.1 L78.5 279.7 L78.0 278.8 L77.5 277.9 L77.0 279.7 L76.5 279.7 L76.0 279.0 L75.5 278.0 L75.0 277.1 L74.5 275.6 L74.0 274.5 L73.5 274.7 L73.0 274.6 L72.5 274.0 L72.0 274.8 L71.5 274.6 L71.0 274.5 L70.5 275.3 L70.0 274.5 L69.5 275.5 L69.0 276.0 L68.5 275.5 L68.0 276.2 L67.5 275.6 L67.0 275.9 L66.5 276.2 L66.0 274.9 L65.5 275.6 L65.0 275.1 L64.5 276.6 L64.0 275.3 L63.5 274.8 L63.0 274.8 L62.5 274.5 L62.0 274.2Z" fill="#5587E8"/>
<g stroke="#8A8A8A" stroke-width="1.5">
<line x1="307" y1="213" x2="307" y2="222"/><line x1="552" y1="213" x2="552" y2="222"/><line x1="797" y1="213" x2="797" y2="222"/><line x1="1042" y1="213" x2="1042" y2="222"/>
</g>
</svg>
<div class="a mono t tl" style="left:65px">00</div>
<div class="a mono t tl" style="left:292px">00:02</div>
<div class="a mono t tl" style="left:537px">00:04</div>
<div class="a mono t tl" style="left:782px">00:06</div>
<div class="a mono t tl" style="left:1027px">00:08</div>

<div class="a" style="left:346px;top:304px;width:454px;height:27px;border-radius:4px;background:#3F4145"></div>
<div class="a t" style="left:358px;top:311px;font-size:13.5px;font-weight:bold;color:#E0515B">Pierre:</div>
<div class="a t" style="left:406px;top:311px;font-size:13.5px;color:#F4F4F4">Bonjour à tous, commençons par la mise à jour du Projet Alpha.</div>

<div class="a mono t" style="left:38.5px;top:351.5px;font-size:10.8px;letter-spacing:1.15px;color:#9A9A9A">00:00</div>
<div class="a mono t" style="left:1057.5px;top:351.5px;font-size:10.8px;letter-spacing:1.15px;color:#9A9A9A">-00:08</div>
<div class="a" style="left:104px;top:353px;width:940px;height:9px;border-radius:5px;background:#EDEDED;border:1px solid #CACACA"></div>
<div class="a" style="left:102px;top:349.5px;width:16px;height:16px;border-radius:50%;background:#3370F0"></div>


<svg class="a" style="left:0;top:380px" width="560" height="40">
<g fill="none" stroke="#262626" stroke-width="1.5" stroke-linecap="round">
<path d="M270.2 20.5 A6.3 6.3 0 1 0 276.5 13.9"/>
<path d="M324.2 20.5 A6.3 6.3 0 1 0 330.5 13.9" transform="translate(-6 0)"/>
<path d="M438.8 20.5 A6.3 6.3 0 1 1 432.5 13.9"/>
<path d="M486.8 20.5 A6.3 6.3 0 1 1 480.5 13.9"/>
<path d="M521 17 H523.8 L528.3 13.5 V26.5 L523.8 23 H521Z" stroke-linejoin="round"/>
<path d="M531 17.5 Q532.6 20 531 22.5"/>
<path d="M533.5 14.5 Q537 20 533.5 25.5"/>
</g>
<g fill="#262626">
<path d="M273.6 14 L277.3 11.5 L277.3 16.5Z"/>
<path d="M321.6 14 L325.3 11.5 L325.3 16.5Z"/>
<path d="M435.4 14 L431.7 11.5 L431.7 16.5Z"/>
<path d="M483.4 14 L479.7 11.5 L479.7 16.5Z"/>
</g>
<g font-family="Liberation Sans" font-weight="bold" font-size="6.3" fill="#262626" text-anchor="middle">
<text x="276.8" y="22.6">30</text><text x="324.8" y="22.6">10</text><text x="432.5" y="22.6">10</text><text x="480.5" y="22.6">30</text>
</g>
</svg>
<div class="a" style="left:354.5px;top:375.5px;width:48px;height:48px;border-radius:50%;background:#4F82EA"></div>
<svg class="a" style="left:370px;top:390px" width="20" height="20"><path d="M4.6 3 L15.2 10 L4.6 16.6Z" fill="#2E2E2E"/></svg>

<div class="a t" style="left:558.5px;top:385px;width:72px;height:29px;border-radius:11px;background:#fff;border:1px solid #C9D6F2;font-size:13px;font-weight:bold;color:#2A2A2A;line-height:27px;padding-left:22px">1x</div>
<svg class="a" style="left:599px;top:396px" width="10" height="8"><path d="M2.7 2.1 L8.3 2.1 L5.5 5.8Z" fill="#444"/></svg>

<svg class="a" style="left:862px;top:393px" width="14" height="14"><path d="M2.6 2 V12" stroke="#2A2A2A" stroke-width="1.5"/><path d="M2.6 2.4 H6.6 L7.2 3.5 H10.9 V8.8 H7.3 L6.7 7.7 H2.6Z" fill="#2A2A2A"/></svg>
<div class="a t" style="left:879px;top:393px;font-size:12px;color:#333">Marquer</div>
<div class="a t" style="left:945.5px;top:385px;width:162px;height:29px;border-radius:13px;background:#fff;border:1px solid #C9D6F2;font-size:12.7px;font-weight:bold;color:#2A2A2A;line-height:29px;text-align:center">Événements marqués</div>

<div class="a t" style="left:46px;top:434px;font-size:9px;color:#333">Speakers</div>
<div class="a" style="left:111px;top:431.5px;width:615px;height:14px;background:#CB5F66"></div>
<div class="a" style="left:726px;top:431.5px;width:381.5px;height:14px;background:#7B73E0"></div>


<!-- SUMMARY -->
<svg class="a" style="left:46px;top:471px" width="13" height="13"><rect x="1.5" y="1.5" width="10" height="10" rx="1.2" fill="none" stroke="#333" stroke-width="1.3"/><path d="M4.3 9.5V7.6M6.5 9.5V5.5M8.7 9.5V4" stroke="#333" stroke-width="1.1"/></svg>
<div class="a t" style="left:65px;top:471px;font-size:11px;font-weight:bold;color:#2A2A2A">Résumé de l'IA</div>
<svg class="a" style="left:1058px;top:468px" width="44" height="16" fill="none" stroke="#333" stroke-width="1.2" stroke-linecap="round">
<path d="M3.5 12 L11 4.3 M5.2 4.3 H11 V10"/>
<path d="M27.5 12.7 L36 4.2 M31.5 3.8 H36.3 V8.6 M27 8.3 V13 H31.7"/>
</svg>
<div class="a t tab" style="left:60px;color:#4A9AA2">Transcription</div>
<div class="a" style="left:46px;top:523px;width:97px;height:2px;background:#4A9AA2"></div>
<div class="a t tab" style="left:157px">Résumé</div>
<div class="a t tab" style="left:229.5px">Actes</div>
<div class="a t tab" style="left:287.5px">Décisions</div>
<div class="a t tab" style="left:367.5px">Chapitres</div>
<div class="a" style="left:38px;top:525px;width:1069px;height:1px;background:#C9D6F2"></div>
<div class="a t xb" style="left:943.5px;width:36.5px">MD</div>
<div class="a t xb" style="left:981px;width:40.5px">SRT</div>
<div class="a t xb" style="left:1022.5px;width:48.5px">JSON</div>
<div class="a t xb" style="left:1072px;width:27.5px"></div>
<svg class="a" style="left:1079px;top:503.7px" width="12" height="12"><path d="M7.6 2.4 A3.7 3.7 0 1 0 9.9 7.3" fill="none" stroke="#8E8E8E" stroke-width="1.2"/><path d="M7.3 5.4 L10.9 2.1 L10.9 5.6Z" fill="#8E8E8E"/></svg>

<div class="a t" style="left:1027px;top:538px;width:64px;height:20.5px;border:1px solid #C9D6F2;border-radius:5px;font-size:11px;color:#8E8E8E;line-height:19px;padding-left:25px">Copie</div>
<svg class="a" style="left:1036px;top:541px" width="14" height="14"><rect x="2.2" y="4" width="6.5" height="8.3" rx="0.8" fill="#B8B8B8"/><rect x="4.3" y="2" width="6.5" height="8.3" rx="0.8" fill="#8E8E8E"/></svg>

<div class="a" style="left:54px;top:566px;width:1037.5px;height:132px;border:1px solid #C9D6F2;border-radius:8px;overflow:hidden;background:#F4F7FE">
 <div style="height:31px;background:#fff;border-bottom:1px solid #C9D6F2"></div>
 <div style="height:33.5px;border-bottom:1px solid #C9D6F2"></div>
 <div style="height:33.5px;border-bottom:1px solid #C9D6F2"></div>
</div>
<div class="a t" style="left:65px;top:578px;font-size:10.6px;font-weight:bold;letter-spacing:0.55px;color:#9A9A9A">ORATEURS</div>
<div class="a" style="left:65px;top:610.5px;width:8px;height:8px;border-radius:50%;background:#C9434B"></div>
<div class="a" style="left:65px;top:644px;width:8px;height:8px;border-radius:50%;background:#5F57E0"></div>
<div class="a" style="left:65px;top:677.5px;width:8px;height:8px;border-radius:50%;background:#D9682A"></div>
<div class="a t spk" style="left:81px;top:608px">Pierre</div>
<div class="a t spk" style="left:81px;top:640.5px">Marie</div>
<div class="a t spk" style="left:81px;top:674.5px">Jean-Luc</div>
<div class="a t sel" style="top:604px">Fusionner avec...</div>
<div class="a t sel" style="top:637.5px">Fusionner avec...</div>
<div class="a t sel" style="top:671px">Fusionner avec...</div>
<svg class="a" style="left:1066px;top:609px" width="12" height="80" fill="none" stroke="#555" stroke-width="1.1"><path d="M1.8 2.6 L5.9 6.6 L10 2.6"/><path d="M1.8 36.1 L5.9 40.1 L10 36.1"/><path d="M1.8 69.6 L5.9 73.6 L10 69.6"/></svg>

<!-- transcript -->
<div class="a t bdg" style="left:54px;top:710.5px;width:45px;border-color:#D0636A;color:#C9474F">Pierre</div>
<div class="a mono t tm" style="left:111.5px;top:712.5px">00:00</div>
<div class="a t tx" style="top:732.3px">Bonjour à tous, commençons par la mise à jour du Projet Alpha.</div>
<div class="a t bdg" style="left:54px;top:761.5px;width:42.5px;border-color:#7D76E6;color:#6861DD">Marie</div>
<div class="a mono t tm" style="left:109px;top:763.5px">00:05</div>
<div class="a t tx" style="top:783.3px">Merci Pierre. Concernant le calendrier, nous avons rencontré un problème d'intégration frontend, ce qui retarde la version bêta de deux semaines.</div>
<div class="a t bdg" style="left:54px;top:812.5px;width:62px;border-color:#E08A55;color:#D2692E">Jean-Luc</div>
<div class="a mono t tm" style="left:128.5px;top:814.5px">00:15</div>
<div class="a t tx" style="top:834.3px">Côté technique, la latence API est plus élevée que prévu. Nous devrons augmenter les instances, ce qui impactera le budget mensuel d'environ dix pour cent.</div>
<div class="a t bdg" style="left:54px;top:863.5px;width:45px;border-color:#D0636A;color:#C9474F">Pierre</div>
<div class="a mono t tm" style="left:111.5px;top:865.5px">00:25</div>
<div class="a t tx" style="top:885.3px">Compris. Approuvons cette augmentation de budget et visons la nouvelle date. Réunion terminée.</div>

<div class="a" style="left:1109.5px;top:180px;width:2px;height:861.5px;border-radius:1px;background:#DCDEE4"></div>


<!-- RIGHT PANEL -->
<svg class="a" style="left:1120px;top:188px" width="16" height="14"><g fill="none" stroke="#2E2E2E" stroke-width="1.3"><rect x="3.2" y="4" width="9.3" height="7.8" rx="0.6"/></g><path d="M7.9 1.6 L9.2 4 H6.6Z M2.8 6.5 L1.2 8 L2.8 9.5Z M12.9 6.5 L14.5 8 L12.9 9.5Z" fill="#2E2E2E"/><rect x="5.4" y="6.3" width="1.4" height="1.4" fill="#2E2E2E"/><rect x="8.9" y="6.3" width="1.4" height="1.4" fill="#2E2E2E"/><rect x="5.6" y="9.1" width="4.5" height="1" fill="#2E2E2E"/></svg>
<div class="a t" style="left:1141px;top:189px;font-size:11px;font-weight:bold;color:#2A2A2A">Agent IA et collègue</div>
<svg class="a" style="left:1832px;top:186px" width="42" height="16" fill="none" stroke="#2A2A2A" stroke-width="1.3" stroke-linecap="round">
<path d="M11.8 3.8 L4.8 10.8 M4.5 5.8 V11.3 H10"/>
<path d="M28 12.5 L36.3 4.2 M32 3.4 H37.1 V8.5 M27.2 7.8 V12.9 H32.3"/>
</svg>

<div class="a" style="left:1113.5px;top:211px;width:768.5px;height:830.5px;border-radius:10px 10px 8px 8px;background:#fff;overflow:hidden">
  <div class="a" style="left:0;top:42px;width:768.5px;height:36px;background:#F4F7FE;border-top:1px solid #C9D6F2;border-bottom:1px solid #C9D6F2"></div>
  <div class="a" style="left:0;top:703px;width:768.5px;height:1px;background:#C9D6F2"></div>
  <div class="a" style="left:0;top:742.5px;width:768.5px;height:1px;background:#C9D6F2"></div>
  <div class="a" style="left:0;top:778px;width:768.5px;height:1px;background:#C9D6F2"></div>
</div>
<svg class="a" style="left:1126px;top:224px" width="16" height="14"><path d="M8 1.3 L9.4 3.6 H12.3 Q13 3.6 13 4.3 V6.2 L14.5 7.6 L13 9 V12.4 Q13 13 12.3 13 H3.7 Q3 13 3 12.4 V9 L1.5 7.6 L3 6.2 V4.3 Q3 3.6 3.7 3.6 H6.6Z" fill="#2A2A2A"/><rect x="5.3" y="6.2" width="1.8" height="1.8" fill="#fff"/><rect x="8.9" y="6.2" width="1.8" height="1.8" fill="#fff"/><rect x="5.4" y="9.6" width="5.2" height="1.2" fill="#fff"/></svg>
<div class="a t" style="left:1150px;top:225px;font-size:13px;font-weight:bold;color:#2A2A2A">Contexte : Demo_Transcription_fr_20260330080006.webm</div>
<div class="a" style="left:1834px;top:221px;width:34px;height:22px;border:1px solid #C9D6F2;border-radius:5px;background:#F4F7FE"></div>
<svg class="a" style="left:1846px;top:227px" width="10" height="10"><path d="M5 1V9M1 5H9" stroke="#9A9A9A" stroke-width="1.3"/></svg>

<div class="a t" style="left:1124px;top:264.7px;font-size:11px;color:#A0A0A0">Séances</div>
<div class="a t" style="left:1172.5px;top:260px;width:405px;height:22px;border:1px solid #C9D6F2;border-radius:5px;background:#F4F7FE;font-size:12px;color:#2E2E2E;line-height:20px;padding-left:8px">Aucune séance pour l'instant. Démarrez une conversation ci-dessous.</div>
<svg class="a" style="left:1558px;top:267px" width="10" height="8"><path d="M1.5 2 L5 5.3 L8.5 2" fill="none" stroke="#888" stroke-width="1"/></svg>
<div class="a t" style="left:1756.5px;top:261.5px;width:115.5px;height:20px;border:1.2px solid #4E9BA2;border-radius:5px;font-size:11px;color:#4E9BA2;line-height:17.5px;padding-left:25px">Nouvelle séance</div>
<svg class="a" style="left:1766px;top:267px" width="10" height="10"><path d="M5 1.2V8.6M1.3 4.9H8.7" stroke="#4E9BA2" stroke-width="1.2"/></svg>

<svg class="a" style="left:1482px;top:551px" width="32" height="32"><path d="M15.80 2.50 L19.87 10.20 L28.45 11.69 L22.38 17.94 L23.62 26.56 L15.80 22.72 L7.98 26.56 L9.22 17.94 L3.15 11.69 L11.73 10.20Z" fill="#B8D6DB" stroke="#B8D6DB" stroke-width="4" stroke-linejoin="round"/><circle cx="12" cy="13.1" r="2" fill="#fff"/><circle cx="19.8" cy="13.1" r="2" fill="#fff"/><path d="M11.3 17.6 H20.5 Q19.8 21.4 15.9 21.4 Q12 21.4 11.3 17.6Z" fill="#fff"/></svg>
<div class="a t" style="left:1469px;top:597px;font-size:14px;font-weight:bold;color:#2A2A2A">Agent IA</div>
<div class="a t" style="left:1379px;top:627px;font-size:12px;color:#9A9A9A">Commandes : /nouveau · /clear · /cost · /help</div>

<div class="a t chip" style="left:1126px;width:176px;padding-left:25.5px">Résumer cet enregistrement</div>
<svg class="a" style="left:1137px;top:928.5px" width="12" height="12"><path d="M1.8 1.2 H7.5 L10.2 3.9 V10.8 H1.8Z" fill="#9A9A9A"/><path d="M3.6 4.3H5.5M3.6 6.3H8.3M3.6 8.3H8.3" stroke="#fff" stroke-width="0.9"/></svg>
<div class="a t chip" style="left:1309px;width:203px;padding-left:25.5px">Rechercher des éléments d'action</div>
<svg class="a" style="left:1319px;top:928px" width="13" height="13"><path d="M10.5 4.2 A4.8 4.8 0 1 1 8.8 2.1" fill="none" stroke="#8E8E8E" stroke-width="1.2"/><path d="M4 6.2 L6 8.2 L10.8 3.2" fill="none" stroke="#8E8E8E" stroke-width="1.2"/></svg>
<div class="a t chip" style="left:1519px;width:147px;padding-left:25.5px">Projet d'e-mail de suivi</div>
<svg class="a" style="left:1529px;top:928px" width="13" height="12"><rect x="1" y="2" width="10.5" height="8" rx="1" fill="#9A9A9A"/><path d="M1.5 3 L6.25 6.3 L11 3" fill="none" stroke="#fff" stroke-width="1"/></svg>

<div class="a t" style="left:1124px;top:961.5px;width:68.5px;height:20.5px;border:1px solid #C9D6F2;border-radius:8px;font-size:10.8px;color:#9A9A9A;line-height:18.5px;padding-left:8.5px">Claude</div>
<svg class="a" style="left:1172px;top:968px" width="10" height="8"><path d="M1.5 2 L4.8 5 L8.1 2" fill="none" stroke="#999" stroke-width="1"/></svg>
<div class="a" style="left:1201.5px;top:961px;width:166px;height:22px;border-radius:8px;background:#F1F5FD"></div>
<div class="a" style="left:1202.5px;top:962.5px;width:70.5px;height:19px;border-radius:7px;background:#fff;box-shadow:0 1px 2px rgba(0,0,0,0.12)"></div>
<div class="a t" style="left:1212.5px;top:966px;font-size:11px;color:#2E2E2E">Demander</div>
<div class="a t" style="left:1286px;top:966px;font-size:11px;color:#9A9A9A">Code</div>
<div class="a t" style="left:1334px;top:966px;font-size:11px;color:#9A9A9A">Plan</div>

<div class="a t mdl" style="left:1552px;width:102.5px;background:#4E9BA2;border-color:#4E9BA2;color:#fff">Claude Haiku 4.5</div>
<div class="a t mdl" style="left:1658.5px;width:108.5px">Claude Sonnet 4.6</div>
<div class="a t mdl" style="left:1772px;width:100px">Claude Opus 4.6</div>

<div class="a t" style="left:1124px;top:998.5px;width:703.5px;height:35px;border:1px solid #C9D6F2;border-radius:8px;background:#fff;font-size:13px;color:#9A9A9A;line-height:31.5px;padding-left:10px">Demandez n'importe quoi... (Entrée pour envoyer, Maj+Entrée pour une nouvelle ligne)</div>
<div class="a" style="left:1836px;top:998.5px;width:35.5px;height:35px;border-radius:8px;background:linear-gradient(135deg,#C4D8F8,#CDD0F6)"></div>
<svg class="a" style="left:1845px;top:1008px" width="18" height="16"><path d="M2.2 2.2 L15.5 8 L2.2 13.8 L3.6 8.8 L9 8 L3.6 7.2Z" fill="#fff"/></svg>

</body></html>
